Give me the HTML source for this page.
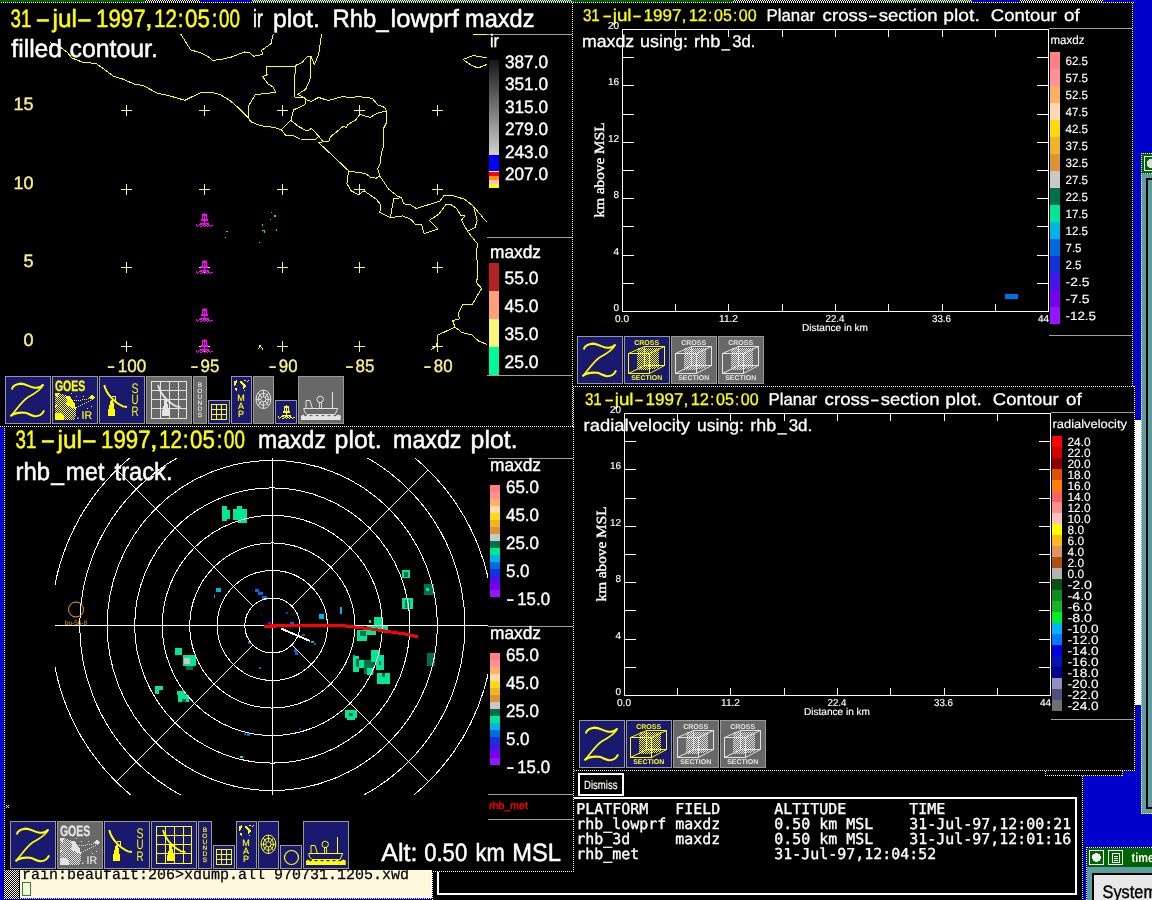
<!DOCTYPE html>
<html lang="en"><head><meta charset="utf-8"><title>zeb display - 31-jul-1997</title>
<style>html,body{margin:0;padding:0;background:#0000cd;overflow:hidden}svg{display:block;will-change:transform}text{white-space:pre}</style>
</head><body>
<svg width="1152" height="900" viewBox="0 0 1152 900" shape-rendering="crispEdges" text-rendering="geometricPrecision">
<rect x="0" y="0" width="1152" height="900" fill="#0000cd" />
<pattern id="stipY" width="2" height="2" patternUnits="userSpaceOnUse"><rect x="0" y="0" width="1" height="1" fill="#ffff00"/><rect x="1" y="1" width="1" height="1" fill="#ffff00"/></pattern>
<pattern id="stipG" width="2" height="2" patternUnits="userSpaceOnUse"><rect x="0" y="0" width="1" height="1" fill="#e4e4e4"/><rect x="1" y="1" width="1" height="1" fill="#e4e4e4"/></pattern>
<rect x="0" y="0" width="1152" height="3" fill="#000000" />
<pattern id="stipGW" width="2" height="2" patternUnits="userSpaceOnUse"><rect width="2" height="2" fill="#006400"/><rect x="0" y="0" width="1" height="1" fill="#ffffff"/><rect x="1" y="1" width="1" height="1" fill="#ffffff"/></pattern>
<pattern id="stipW" width="2" height="2" patternUnits="userSpaceOnUse"><rect width="2" height="2" fill="#000000"/><rect x="0" y="0" width="1" height="1" fill="#ffffff"/><rect x="1" y="1" width="1" height="1" fill="#ffffff"/></pattern>
<rect x="0" y="0" width="1134" height="2" fill="url(#stipW)" />
<rect x="0" y="0" width="145" height="2" fill="#006400" />
<rect x="200" y="0" width="52" height="2" fill="#0000cd" />
<rect x="252" y="0" width="320" height="2" fill="url(#stipGW)" />
<rect x="572" y="0" width="161" height="2" fill="#006400" />
<rect x="884" y="0" width="88" height="2" fill="url(#stipGW)" />
<rect x="972" y="0" width="48" height="2" fill="#0000cd" />
<rect x="1103" y="0" width="31" height="2" fill="#0000cd" />
<line x1="1" y1="2.5" x2="1134" y2="2.5" stroke="#ffffff" stroke-width="1" stroke-dasharray="1 1"/>
<rect x="1134" y="0" width="18" height="3" fill="#0000cd" />
<rect x="1141" y="153" width="11" height="661" fill="#5f9ea0" />
<rect x="1141" y="153" width="11" height="21" fill="#006400" />
<line x1="1141" y1="153.5" x2="1152" y2="153.5" stroke="#ffffff" stroke-width="1" stroke-dasharray="1 1"/>
<line x1="1141" y1="173.5" x2="1152" y2="173.5" stroke="#ffffff" stroke-width="1" stroke-dasharray="1 1"/>
<line x1="1141.5" y1="153" x2="1141.5" y2="814" stroke="#ffffff" stroke-width="1" stroke-dasharray="1 1"/>
<line x1="1141" y1="813.5" x2="1152" y2="813.5" stroke="#ffffff" stroke-width="1" stroke-dasharray="1 1"/>
<rect x="1144" y="156" width="8" height="15" fill="#ffffff" />
<rect x="1145" y="157" width="7" height="13" fill="#006400" />
<circle cx="1151" cy="163.5" r="4.5" fill="#dcdcdc"/>
<rect x="1146" y="178" width="2" height="631" fill="#000000" />
<rect x="1146" y="807" width="6" height="2" fill="#000000" />
<rect x="1146" y="178" width="6" height="2" fill="#000000" />
<rect x="1135" y="420" width="6" height="285" fill="#ffffff" />
<rect x="1087" y="848" width="65" height="52" fill="#5f9ea0" />
<rect x="1087" y="848" width="65" height="19" fill="#006400" />
<line x1="1087" y1="847.5" x2="1152" y2="847.5" stroke="#ffffff" stroke-width="1" stroke-dasharray="1 1"/>
<line x1="1086.5" y1="847" x2="1086.5" y2="900" stroke="#ffffff" stroke-width="1" stroke-dasharray="1 1"/>
<rect x="1089.5" y="850.5" width="14" height="14" fill="none" stroke="#ffffff" stroke-width="1"/>
<circle cx="1096.5" cy="857.5" r="4.5" fill="#f0f0f0"/>
<rect x="1108.5" y="850.5" width="14" height="14" fill="none" stroke="#ffffff" stroke-width="1"/>
<rect x="1112.5" y="853.5" width="7" height="9" fill="none" stroke="#ffffff" stroke-width="1"/>
<path d="M1114 856.5 H1118 M1114 858.5 H1118 M1114 860.5 H1118" stroke="#ffffff" stroke-width="1"/>
<text x="1131.5" y="861.5" font-size="13" fill="#ffffff" font-family='"Liberation Sans", sans-serif' textLength="22.5" lengthAdjust="spacingAndGlyphs" font-weight="bold"  xml:space="preserve">time</text>
<rect x="1092" y="873" width="60" height="27" fill="#000000" />
<rect x="1094" y="875" width="58" height="25" fill="#e8e8e8" />
<text x="1102.5" y="898.3" font-size="18" fill="#000000" font-family='"Liberation Sans", sans-serif' stroke="#000000" stroke-width="0.4" stroke-linejoin="round" textLength="54.5" lengthAdjust="spacingAndGlyphs"  xml:space="preserve">System</text>
<rect x="432" y="771" width="651" height="129" fill="#000000" />
<line x1="1082.5" y1="776" x2="1082.5" y2="900" stroke="#ffffff" stroke-width="1" stroke-dasharray="1 1"/>
<line x1="432.5" y1="871" x2="432.5" y2="900" stroke="#ffffff" stroke-width="1" stroke-dasharray="1 1"/>
<rect x="1045" y="771" width="78" height="5" fill="#000000" />
<line x1="1045" y1="775.5" x2="1123" y2="775.5" stroke="#ffffff" stroke-width="1" stroke-dasharray="1 1"/>
<line x1="1045.5" y1="771" x2="1045.5" y2="776" stroke="#ffffff" stroke-width="1" stroke-dasharray="1 1"/>
<line x1="1122.5" y1="771" x2="1122.5" y2="776" stroke="#ffffff" stroke-width="1" stroke-dasharray="1 1"/>
<rect x="578" y="773" width="46" height="23" fill="#ffffff" />
<rect x="580" y="775" width="42" height="19" fill="#000000" />
<text x="584" y="788.6" font-size="12" fill="#ffffff" font-family='"Liberation Sans", sans-serif' stroke="#ffffff" stroke-width="0.15" stroke-linejoin="round" textLength="33.5" lengthAdjust="spacingAndGlyphs"  xml:space="preserve">Dismiss</text>
<rect x="437" y="797" width="640" height="98" fill="#ffffff" />
<rect x="439" y="799" width="636" height="94" fill="#000000" />
<text x="576.2" y="813.7" font-size="15" fill="#ffffff" font-family='"DejaVu Sans Mono", "Liberation Mono", monospace' stroke="#ffffff" stroke-width="0.35" stroke-linejoin="round" textLength="369" lengthAdjust="spacingAndGlyphs"  xml:space="preserve">PLATFORM   FIELD      ALTITUDE       TIME</text>
<text x="576.2" y="828.7" font-size="15" fill="#ffffff" font-family='"DejaVu Sans Mono", "Liberation Mono", monospace' stroke="#ffffff" stroke-width="0.35" stroke-linejoin="round" textLength="495" lengthAdjust="spacingAndGlyphs"  xml:space="preserve">rhb_lowprf maxdz      0.50 km MSL    31-Jul-97,12:00:21</text>
<text x="576.2" y="843.7" font-size="15" fill="#ffffff" font-family='"DejaVu Sans Mono", "Liberation Mono", monospace' stroke="#ffffff" stroke-width="0.35" stroke-linejoin="round" textLength="495" lengthAdjust="spacingAndGlyphs"  xml:space="preserve">rhb_3d     maxdz      0.50 km MSL    31-Jul-97,12:01:16</text>
<text x="576.2" y="858.7" font-size="15" fill="#ffffff" font-family='"DejaVu Sans Mono", "Liberation Mono", monospace' stroke="#ffffff" stroke-width="0.35" stroke-linejoin="round" textLength="360" lengthAdjust="spacingAndGlyphs"  xml:space="preserve">rhb_met               31-Jul-97,12:04:52</text>
<rect x="573" y="386" width="562" height="385" fill="#000000" />
<line x1="573" y1="386.5" x2="1135" y2="386.5" stroke="#ffffff" stroke-width="1" stroke-dasharray="1 1"/>
<line x1="574" y1="770.5" x2="1135" y2="770.5" stroke="#ffffff" stroke-width="1" stroke-dasharray="1 1"/>
<line x1="573.5" y1="386" x2="573.5" y2="771" stroke="#ffffff" stroke-width="1" stroke-dasharray="1 1"/>
<line x1="1134.5" y1="386" x2="1134.5" y2="771" stroke="#ffffff" stroke-width="1" stroke-dasharray="1 1"/>
<text y="404.5" font-size="17" font-family='"Liberation Sans", sans-serif' stroke-linejoin="round" xml:space="preserve"><tspan x="584.90" textLength="16.91" lengthAdjust="spacingAndGlyphs" fill="#ffff00" stroke="#ffff00" stroke-width="0.3">31</tspan><tspan x="604.60" textLength="9.51" lengthAdjust="spacingAndGlyphs" fill="#ffff00" stroke="#ffff00" stroke-width="0.3">-</tspan><tspan x="614.71" textLength="18.85" lengthAdjust="spacingAndGlyphs" fill="#ffff00" stroke="#ffff00" stroke-width="0.3">jul</tspan><tspan x="634.20" textLength="9.51" lengthAdjust="spacingAndGlyphs" fill="#ffff00" stroke="#ffff00" stroke-width="0.3">-</tspan><tspan x="645.60" textLength="37.86" lengthAdjust="spacingAndGlyphs" fill="#ffff00" stroke="#ffff00" stroke-width="0.3">1997</tspan><tspan x="683.83" textLength="4.57" lengthAdjust="spacingAndGlyphs" fill="#ffff00" stroke="#ffff00" stroke-width="0.3">,</tspan><tspan x="690.73" textLength="18.31" lengthAdjust="spacingAndGlyphs" fill="#ffff00" stroke="#ffff00" stroke-width="0.3">12</tspan><tspan x="710.60" textLength="3.31" lengthAdjust="spacingAndGlyphs" fill="#ffff00" stroke="#ffff00" stroke-width="0.3">:</tspan><tspan x="716.00" textLength="17.83" lengthAdjust="spacingAndGlyphs" fill="#ffff00" stroke="#ffff00" stroke-width="0.3">05</tspan><tspan x="735.60" textLength="3.31" lengthAdjust="spacingAndGlyphs" fill="#ffff00" stroke="#ffff00" stroke-width="0.3">:</tspan><tspan x="740.80" textLength="17.83" lengthAdjust="spacingAndGlyphs" fill="#ffff00" stroke="#ffff00" stroke-width="0.3">00</tspan>  <tspan x="768.41" textLength="48.76" lengthAdjust="spacingAndGlyphs" fill="#ffffff" stroke="#ffffff" stroke-width="0.3">Planar</tspan> <tspan x="824.60" textLength="44.75" lengthAdjust="spacingAndGlyphs" fill="#ffffff" stroke="#ffffff" stroke-width="0.3">cross</tspan><tspan x="870.00" textLength="9.62" lengthAdjust="spacingAndGlyphs" fill="#ffffff" stroke="#ffffff" stroke-width="0.3">-</tspan><tspan x="880.70" textLength="58.90" lengthAdjust="spacingAndGlyphs" fill="#ffffff" stroke="#ffffff" stroke-width="0.3">section</tspan> <tspan x="945.37" textLength="36.45" lengthAdjust="spacingAndGlyphs" fill="#ffffff" stroke="#ffffff" stroke-width="0.3">plot.</tspan>  <tspan x="992.80" textLength="65.93" lengthAdjust="spacingAndGlyphs" fill="#ffffff" stroke="#ffffff" stroke-width="0.3">Contour</tspan> <tspan x="1066.00" textLength="15.69" lengthAdjust="spacingAndGlyphs" fill="#ffffff" stroke="#ffffff" stroke-width="0.3">of</tspan></text>
<rect x="624" y="413" width="427" height="1" fill="#ffffff" />
<rect x="624" y="695" width="427" height="1" fill="#ffffff" />
<rect x="624" y="413" width="1" height="283" fill="#ffffff" />
<rect x="1050" y="413" width="1" height="283" fill="#ffffff" />
<rect x="624" y="441" width="12" height="1" fill="#ffffff" />
<rect x="1039" y="441" width="11" height="1" fill="#ffffff" />
<rect x="624" y="469" width="12" height="1" fill="#ffffff" />
<rect x="1039" y="469" width="11" height="1" fill="#ffffff" />
<rect x="624" y="498" width="12" height="1" fill="#ffffff" />
<rect x="1039" y="498" width="11" height="1" fill="#ffffff" />
<rect x="624" y="526" width="12" height="1" fill="#ffffff" />
<rect x="1039" y="526" width="11" height="1" fill="#ffffff" />
<rect x="624" y="554" width="12" height="1" fill="#ffffff" />
<rect x="1039" y="554" width="11" height="1" fill="#ffffff" />
<rect x="624" y="582" width="12" height="1" fill="#ffffff" />
<rect x="1039" y="582" width="11" height="1" fill="#ffffff" />
<rect x="624" y="610" width="12" height="1" fill="#ffffff" />
<rect x="1039" y="610" width="11" height="1" fill="#ffffff" />
<rect x="624" y="639" width="12" height="1" fill="#ffffff" />
<rect x="1039" y="639" width="11" height="1" fill="#ffffff" />
<rect x="624" y="667" width="12" height="1" fill="#ffffff" />
<rect x="1039" y="667" width="11" height="1" fill="#ffffff" />
<rect x="677" y="413" width="1" height="8" fill="#ffffff" />
<rect x="677" y="688" width="1" height="7" fill="#ffffff" />
<rect x="730" y="413" width="1" height="8" fill="#ffffff" />
<rect x="730" y="688" width="1" height="7" fill="#ffffff" />
<rect x="784" y="413" width="1" height="8" fill="#ffffff" />
<rect x="784" y="688" width="1" height="7" fill="#ffffff" />
<rect x="837" y="413" width="1" height="8" fill="#ffffff" />
<rect x="837" y="688" width="1" height="7" fill="#ffffff" />
<rect x="890" y="413" width="1" height="8" fill="#ffffff" />
<rect x="890" y="688" width="1" height="7" fill="#ffffff" />
<rect x="944" y="413" width="1" height="8" fill="#ffffff" />
<rect x="944" y="688" width="1" height="7" fill="#ffffff" />
<rect x="997" y="413" width="1" height="8" fill="#ffffff" />
<rect x="997" y="688" width="1" height="7" fill="#ffffff" />
<text y="431.3" font-size="17" font-family='"Liberation Sans", sans-serif' stroke-linejoin="round" xml:space="preserve"><tspan x="583.62" textLength="106.44" lengthAdjust="spacingAndGlyphs" fill="#ffffff" stroke="#ffffff" stroke-width="0.3">radialvelocity</tspan> <tspan x="696.97" textLength="46.88" lengthAdjust="spacingAndGlyphs" fill="#ffffff" stroke="#ffffff" stroke-width="0.3">using:</tspan> <tspan x="750.24" textLength="25.94" lengthAdjust="spacingAndGlyphs" fill="#ffffff" stroke="#ffffff" stroke-width="0.3">rhb</tspan><tspan x="777.63" textLength="8.77" lengthAdjust="spacingAndGlyphs" fill="#ffffff" stroke="#ffffff" stroke-width="0.3">_</tspan><tspan x="788.70" textLength="23.52" lengthAdjust="spacingAndGlyphs" fill="#ffffff" stroke="#ffffff" stroke-width="0.3">3d.</tspan></text>
<text x="621" y="413" font-size="10" fill="#ffffff" font-family='"Liberation Sans", sans-serif' stroke="#ffffff" stroke-width="0.15" stroke-linejoin="round" text-anchor="end"  xml:space="preserve">20</text>
<text x="621" y="469.4" font-size="10" fill="#ffffff" font-family='"Liberation Sans", sans-serif' stroke="#ffffff" stroke-width="0.15" stroke-linejoin="round" text-anchor="end"  xml:space="preserve">16</text>
<text x="621" y="525.8" font-size="10" fill="#ffffff" font-family='"Liberation Sans", sans-serif' stroke="#ffffff" stroke-width="0.15" stroke-linejoin="round" text-anchor="end"  xml:space="preserve">12</text>
<text x="621" y="582.2" font-size="10" fill="#ffffff" font-family='"Liberation Sans", sans-serif' stroke="#ffffff" stroke-width="0.15" stroke-linejoin="round" text-anchor="end"  xml:space="preserve">8</text>
<text x="621" y="638.6" font-size="10" fill="#ffffff" font-family='"Liberation Sans", sans-serif' stroke="#ffffff" stroke-width="0.15" stroke-linejoin="round" text-anchor="end"  xml:space="preserve">4</text>
<text x="621" y="695" font-size="10" fill="#ffffff" font-family='"Liberation Sans", sans-serif' stroke="#ffffff" stroke-width="0.15" stroke-linejoin="round" text-anchor="end"  xml:space="preserve">0</text>
<text x="624" y="705.8" font-size="10" fill="#ffffff" font-family='"Liberation Sans", sans-serif' stroke="#ffffff" stroke-width="0.15" stroke-linejoin="round" textLength="14" lengthAdjust="spacingAndGlyphs" text-anchor="middle"  xml:space="preserve">0.0</text>
<text x="730.5" y="705.8" font-size="10" fill="#ffffff" font-family='"Liberation Sans", sans-serif' stroke="#ffffff" stroke-width="0.15" stroke-linejoin="round" textLength="19" lengthAdjust="spacingAndGlyphs" text-anchor="middle"  xml:space="preserve">11.2</text>
<text x="837" y="705.8" font-size="10" fill="#ffffff" font-family='"Liberation Sans", sans-serif' stroke="#ffffff" stroke-width="0.15" stroke-linejoin="round" textLength="19" lengthAdjust="spacingAndGlyphs" text-anchor="middle"  xml:space="preserve">22.4</text>
<text x="943.5" y="705.8" font-size="10" fill="#ffffff" font-family='"Liberation Sans", sans-serif' stroke="#ffffff" stroke-width="0.15" stroke-linejoin="round" textLength="19" lengthAdjust="spacingAndGlyphs" text-anchor="middle"  xml:space="preserve">33.6</text>
<text x="1051" y="705.8" font-size="10" fill="#ffffff" font-family='"Liberation Sans", sans-serif' stroke="#ffffff" stroke-width="0.15" stroke-linejoin="round" text-anchor="end"  xml:space="preserve">44</text>
<text x="804" y="715" font-size="10" fill="#ffffff" font-family='"Liberation Sans", sans-serif' stroke="#ffffff" stroke-width="0.15" stroke-linejoin="round" textLength="66" lengthAdjust="spacingAndGlyphs"  xml:space="preserve">Distance in km</text>
<text transform="translate(605.5,554) rotate(-90)" text-anchor="middle" font-size="14" stroke="#ffffff" stroke-width="0.35" fill="#ffffff" font-family='"Liberation Serif", serif' textLength="95" lengthAdjust="spacingAndGlyphs">km above MSL</text>
<rect x="1051" y="412" width="83" height="1" fill="#a0a0a0" />
<rect x="1051" y="719" width="83" height="1" fill="#a0a0a0" />
<text x="1052.5" y="427.6" font-size="12" fill="#ffffff" font-family='"Liberation Sans", sans-serif' stroke="#ffffff" stroke-width="0.15" stroke-linejoin="round" textLength="74.5" lengthAdjust="spacingAndGlyphs"  xml:space="preserve">radialvelocity</text>
<rect x="1052" y="436" width="10" height="11" fill="#ff0000" />
<text x="1067.5" y="446" font-size="12" fill="#ffffff" font-family='"Liberation Sans", sans-serif' stroke="#ffffff" stroke-width="0.15" stroke-linejoin="round" textLength="23.1" lengthAdjust="spacingAndGlyphs"  xml:space="preserve">24.0</text>
<rect x="1052" y="447" width="10" height="11" fill="#d40000" />
<text x="1067.5" y="457" font-size="12" fill="#ffffff" font-family='"Liberation Sans", sans-serif' stroke="#ffffff" stroke-width="0.15" stroke-linejoin="round" textLength="23.1" lengthAdjust="spacingAndGlyphs"  xml:space="preserve">22.0</text>
<rect x="1052" y="458" width="10" height="11" fill="#8c0000" />
<text x="1067.5" y="468" font-size="12" fill="#ffffff" font-family='"Liberation Sans", sans-serif' stroke="#ffffff" stroke-width="0.15" stroke-linejoin="round" textLength="23.1" lengthAdjust="spacingAndGlyphs"  xml:space="preserve">20.0</text>
<rect x="1052" y="469" width="10" height="11" fill="#e05000" />
<text x="1067.5" y="479" font-size="12" fill="#ffffff" font-family='"Liberation Sans", sans-serif' stroke="#ffffff" stroke-width="0.15" stroke-linejoin="round" textLength="23.1" lengthAdjust="spacingAndGlyphs"  xml:space="preserve">18.0</text>
<rect x="1052" y="480" width="10" height="11" fill="#ff8000" />
<text x="1067.5" y="490" font-size="12" fill="#ffffff" font-family='"Liberation Sans", sans-serif' stroke="#ffffff" stroke-width="0.15" stroke-linejoin="round" textLength="23.1" lengthAdjust="spacingAndGlyphs"  xml:space="preserve">16.0</text>
<rect x="1052" y="491" width="10" height="11" fill="#ff6060" />
<text x="1067.5" y="501" font-size="12" fill="#ffffff" font-family='"Liberation Sans", sans-serif' stroke="#ffffff" stroke-width="0.15" stroke-linejoin="round" textLength="23.1" lengthAdjust="spacingAndGlyphs"  xml:space="preserve">14.0</text>
<rect x="1052" y="502" width="10" height="11" fill="#ff9090" />
<text x="1067.5" y="512" font-size="12" fill="#ffffff" font-family='"Liberation Sans", sans-serif' stroke="#ffffff" stroke-width="0.15" stroke-linejoin="round" textLength="23.1" lengthAdjust="spacingAndGlyphs"  xml:space="preserve">12.0</text>
<rect x="1052" y="513" width="10" height="11" fill="#ffc0c0" />
<text x="1067.5" y="523" font-size="12" fill="#ffffff" font-family='"Liberation Sans", sans-serif' stroke="#ffffff" stroke-width="0.15" stroke-linejoin="round" textLength="23.1" lengthAdjust="spacingAndGlyphs"  xml:space="preserve">10.0</text>
<rect x="1052" y="524" width="10" height="11" fill="#ffff00" />
<text x="1067.5" y="534" font-size="12" fill="#ffffff" font-family='"Liberation Sans", sans-serif' stroke="#ffffff" stroke-width="0.15" stroke-linejoin="round" textLength="16.5" lengthAdjust="spacingAndGlyphs"  xml:space="preserve">8.0</text>
<rect x="1052" y="535" width="10" height="11" fill="#ffb820" />
<text x="1067.5" y="545" font-size="12" fill="#ffffff" font-family='"Liberation Sans", sans-serif' stroke="#ffffff" stroke-width="0.15" stroke-linejoin="round" textLength="16.5" lengthAdjust="spacingAndGlyphs"  xml:space="preserve">6.0</text>
<rect x="1052" y="546" width="10" height="11" fill="#dc9664" />
<text x="1067.5" y="556" font-size="12" fill="#ffffff" font-family='"Liberation Sans", sans-serif' stroke="#ffffff" stroke-width="0.15" stroke-linejoin="round" textLength="16.5" lengthAdjust="spacingAndGlyphs"  xml:space="preserve">4.0</text>
<rect x="1052" y="557" width="10" height="11" fill="#b05010" />
<text x="1067.5" y="567" font-size="12" fill="#ffffff" font-family='"Liberation Sans", sans-serif' stroke="#ffffff" stroke-width="0.15" stroke-linejoin="round" textLength="16.5" lengthAdjust="spacingAndGlyphs"  xml:space="preserve">2.0</text>
<rect x="1052" y="568" width="10" height="11" fill="#b4b4b4" />
<text x="1067.5" y="578" font-size="12" fill="#ffffff" font-family='"Liberation Sans", sans-serif' stroke="#ffffff" stroke-width="0.15" stroke-linejoin="round" textLength="16.5" lengthAdjust="spacingAndGlyphs"  xml:space="preserve">0.0</text>
<rect x="1052" y="579" width="10" height="11" fill="#0a5014" />
<text x="1067.5" y="589" font-size="12" fill="#ffffff" font-family='"Liberation Sans", sans-serif' stroke="#ffffff" stroke-width="0.15" stroke-linejoin="round" textLength="24.5" lengthAdjust="spacingAndGlyphs"  xml:space="preserve">-2.0</text>
<rect x="1052" y="590" width="10" height="11" fill="#0f8c1e" />
<text x="1067.5" y="600" font-size="12" fill="#ffffff" font-family='"Liberation Sans", sans-serif' stroke="#ffffff" stroke-width="0.15" stroke-linejoin="round" textLength="24.5" lengthAdjust="spacingAndGlyphs"  xml:space="preserve">-4.0</text>
<rect x="1052" y="601" width="10" height="11" fill="#14b428" />
<text x="1067.5" y="611" font-size="12" fill="#ffffff" font-family='"Liberation Sans", sans-serif' stroke="#ffffff" stroke-width="0.15" stroke-linejoin="round" textLength="24.5" lengthAdjust="spacingAndGlyphs"  xml:space="preserve">-6.0</text>
<rect x="1052" y="612" width="10" height="11" fill="#00f020" />
<text x="1067.5" y="622" font-size="12" fill="#ffffff" font-family='"Liberation Sans", sans-serif' stroke="#ffffff" stroke-width="0.15" stroke-linejoin="round" textLength="24.5" lengthAdjust="spacingAndGlyphs"  xml:space="preserve">-8.0</text>
<rect x="1052" y="623" width="10" height="11" fill="#00b4ff" />
<text x="1067.5" y="633" font-size="12" fill="#ffffff" font-family='"Liberation Sans", sans-serif' stroke="#ffffff" stroke-width="0.15" stroke-linejoin="round" textLength="31.1" lengthAdjust="spacingAndGlyphs"  xml:space="preserve">-10.0</text>
<rect x="1052" y="634" width="10" height="11" fill="#0078ff" />
<text x="1067.5" y="644" font-size="12" fill="#ffffff" font-family='"Liberation Sans", sans-serif' stroke="#ffffff" stroke-width="0.15" stroke-linejoin="round" textLength="31.1" lengthAdjust="spacingAndGlyphs"  xml:space="preserve">-12.0</text>
<rect x="1052" y="645" width="10" height="11" fill="#0000dc" />
<text x="1067.5" y="655" font-size="12" fill="#ffffff" font-family='"Liberation Sans", sans-serif' stroke="#ffffff" stroke-width="0.15" stroke-linejoin="round" textLength="31.1" lengthAdjust="spacingAndGlyphs"  xml:space="preserve">-14.0</text>
<rect x="1052" y="656" width="10" height="11" fill="#0014b4" />
<text x="1067.5" y="666" font-size="12" fill="#ffffff" font-family='"Liberation Sans", sans-serif' stroke="#ffffff" stroke-width="0.15" stroke-linejoin="round" textLength="31.1" lengthAdjust="spacingAndGlyphs"  xml:space="preserve">-16.0</text>
<rect x="1052" y="667" width="10" height="11" fill="#000090" />
<text x="1067.5" y="677" font-size="12" fill="#ffffff" font-family='"Liberation Sans", sans-serif' stroke="#ffffff" stroke-width="0.15" stroke-linejoin="round" textLength="31.1" lengthAdjust="spacingAndGlyphs"  xml:space="preserve">-18.0</text>
<rect x="1052" y="678" width="10" height="11" fill="#9090c0" />
<text x="1067.5" y="688" font-size="12" fill="#ffffff" font-family='"Liberation Sans", sans-serif' stroke="#ffffff" stroke-width="0.15" stroke-linejoin="round" textLength="31.1" lengthAdjust="spacingAndGlyphs"  xml:space="preserve">-20.0</text>
<rect x="1052" y="689" width="10" height="11" fill="#505080" />
<text x="1067.5" y="699" font-size="12" fill="#ffffff" font-family='"Liberation Sans", sans-serif' stroke="#ffffff" stroke-width="0.15" stroke-linejoin="round" textLength="31.1" lengthAdjust="spacingAndGlyphs"  xml:space="preserve">-22.0</text>
<rect x="1052" y="700" width="10" height="11" fill="#707070" />
<text x="1067.5" y="710" font-size="12" fill="#ffffff" font-family='"Liberation Sans", sans-serif' stroke="#ffffff" stroke-width="0.15" stroke-linejoin="round" textLength="31.1" lengthAdjust="spacingAndGlyphs"  xml:space="preserve">-24.0</text>
<rect x="579" y="720" width="46" height="48" fill="#9696a0" />
<rect x="580" y="721" width="44" height="46" fill="#191970" />
<g transform="translate(579,720)" shape-rendering="auto" fill="none" stroke="#ffff00" stroke-linecap="round" stroke-linejoin="round">
<path d="M7.1 12.6 C7.5 10.5 11 8 15.7 7.6 C20 7.6 24 10.6 28.4 11.5 C32 12.2 36 11.4 37.9 9" stroke-width="2.1"/>
<path d="M37.6 9.5 C36 14 30 17.5 22.9 21.2 C17 25 12 33 6.2 39.6" stroke-width="1.7"/>
<path d="M6.2 39.6 C9 37.5 13 36 20.1 36.8 C24 37.5 26 39.8 30 40.2 C34 40.3 37 38.5 38.7 35.1" stroke-width="2.1"/>
</g>
<rect x="626" y="720" width="46" height="48" fill="#9696a0" />
<rect x="627" y="721" width="44" height="46" fill="#191970" />
<g transform="translate(626,720)">
<text x="10.2" y="9" font-size="7" fill="#ffff00" font-family='"Liberation Sans", sans-serif' textLength="25" lengthAdjust="spacingAndGlyphs" font-weight="bold"  xml:space="preserve">CROSS</text>
<text x="7.2" y="43.9" font-size="7" fill="#ffff00" font-family='"Liberation Sans", sans-serif' textLength="31" lengthAdjust="spacingAndGlyphs" font-weight="bold"  xml:space="preserve">SECTION</text>
<g fill="none" stroke="#ffff00" stroke-width="1">
<rect x="4.5" y="17.5" width="21" height="20"/>
<rect x="20.5" y="10.5" width="20" height="19"/>
<path d="M4.5 17.5 L20.5 10.5 M25.5 17.5 L40.5 10.5 M4.5 37.5 L20.5 29.5 M25.5 37.5 L40.5 29.5" shape-rendering="auto"/>
</g>
<path d="M12.5 12.4 L25.3 12.4 L35 11.4 L35 31.5 L25.3 33.8 L12.5 33.8 Z" fill="url(#stipY)"/>
</g>
<rect x="673" y="720" width="46" height="48" fill="#9a9a9a" />
<rect x="674" y="721" width="44" height="46" fill="#686868" />
<g transform="translate(673,720)">
<text x="10.2" y="9" font-size="7" fill="#e4e4e4" font-family='"Liberation Sans", sans-serif' textLength="25" lengthAdjust="spacingAndGlyphs" font-weight="bold"  xml:space="preserve">CROSS</text>
<text x="7.2" y="43.9" font-size="7" fill="#e4e4e4" font-family='"Liberation Sans", sans-serif' textLength="31" lengthAdjust="spacingAndGlyphs" font-weight="bold"  xml:space="preserve">SECTION</text>
<g fill="none" stroke="#e4e4e4" stroke-width="1">
<rect x="4.5" y="17.5" width="21" height="20"/>
<rect x="20.5" y="10.5" width="20" height="19"/>
<path d="M4.5 17.5 L20.5 10.5 M25.5 17.5 L40.5 10.5 M4.5 37.5 L20.5 29.5 M25.5 37.5 L40.5 29.5" shape-rendering="auto"/>
</g>
<path d="M12.5 12.4 L25.3 12.4 L35 11.4 L35 31.5 L25.3 33.8 L12.5 33.8 Z" fill="url(#stipG)"/>
</g>
<rect x="720" y="720" width="46" height="48" fill="#9a9a9a" />
<rect x="721" y="721" width="44" height="46" fill="#686868" />
<g transform="translate(720,720)">
<text x="10.2" y="9" font-size="7" fill="#e4e4e4" font-family='"Liberation Sans", sans-serif' textLength="25" lengthAdjust="spacingAndGlyphs" font-weight="bold"  xml:space="preserve">CROSS</text>
<text x="7.2" y="43.9" font-size="7" fill="#e4e4e4" font-family='"Liberation Sans", sans-serif' textLength="31" lengthAdjust="spacingAndGlyphs" font-weight="bold"  xml:space="preserve">SECTION</text>
<g fill="none" stroke="#e4e4e4" stroke-width="1">
<rect x="4.5" y="17.5" width="21" height="20"/>
<rect x="20.5" y="10.5" width="20" height="19"/>
<path d="M4.5 17.5 L20.5 10.5 M25.5 17.5 L40.5 10.5 M4.5 37.5 L20.5 29.5 M25.5 37.5 L40.5 29.5" shape-rendering="auto"/>
</g>
<path d="M12.5 12.4 L25.3 12.4 L35 11.4 L35 31.5 L25.3 33.8 L12.5 33.8 Z" fill="url(#stipG)"/>
</g>
<rect x="572" y="3" width="561" height="383" fill="#000000" />
<line x1="572.5" y1="3" x2="572.5" y2="427" stroke="#ffffff" stroke-width="1" stroke-dasharray="1 1"/>
<line x1="1132.5" y1="3" x2="1132.5" y2="386" stroke="#ffffff" stroke-width="1" stroke-dasharray="1 1"/>
<text y="20.5" font-size="17" font-family='"Liberation Sans", sans-serif' stroke-linejoin="round" xml:space="preserve"><tspan x="582.90" textLength="16.91" lengthAdjust="spacingAndGlyphs" fill="#ffff00" stroke="#ffff00" stroke-width="0.3">31</tspan><tspan x="602.60" textLength="9.51" lengthAdjust="spacingAndGlyphs" fill="#ffff00" stroke="#ffff00" stroke-width="0.3">-</tspan><tspan x="612.71" textLength="18.85" lengthAdjust="spacingAndGlyphs" fill="#ffff00" stroke="#ffff00" stroke-width="0.3">jul</tspan><tspan x="632.20" textLength="9.51" lengthAdjust="spacingAndGlyphs" fill="#ffff00" stroke="#ffff00" stroke-width="0.3">-</tspan><tspan x="643.60" textLength="37.86" lengthAdjust="spacingAndGlyphs" fill="#ffff00" stroke="#ffff00" stroke-width="0.3">1997</tspan><tspan x="681.83" textLength="4.57" lengthAdjust="spacingAndGlyphs" fill="#ffff00" stroke="#ffff00" stroke-width="0.3">,</tspan><tspan x="688.73" textLength="18.31" lengthAdjust="spacingAndGlyphs" fill="#ffff00" stroke="#ffff00" stroke-width="0.3">12</tspan><tspan x="708.60" textLength="3.31" lengthAdjust="spacingAndGlyphs" fill="#ffff00" stroke="#ffff00" stroke-width="0.3">:</tspan><tspan x="714.00" textLength="17.83" lengthAdjust="spacingAndGlyphs" fill="#ffff00" stroke="#ffff00" stroke-width="0.3">05</tspan><tspan x="733.60" textLength="3.31" lengthAdjust="spacingAndGlyphs" fill="#ffff00" stroke="#ffff00" stroke-width="0.3">:</tspan><tspan x="738.80" textLength="17.83" lengthAdjust="spacingAndGlyphs" fill="#ffff00" stroke="#ffff00" stroke-width="0.3">00</tspan>  <tspan x="766.41" textLength="48.76" lengthAdjust="spacingAndGlyphs" fill="#ffffff" stroke="#ffffff" stroke-width="0.3">Planar</tspan> <tspan x="822.60" textLength="44.75" lengthAdjust="spacingAndGlyphs" fill="#ffffff" stroke="#ffffff" stroke-width="0.3">cross</tspan><tspan x="868.00" textLength="9.62" lengthAdjust="spacingAndGlyphs" fill="#ffffff" stroke="#ffffff" stroke-width="0.3">-</tspan><tspan x="878.70" textLength="58.90" lengthAdjust="spacingAndGlyphs" fill="#ffffff" stroke="#ffffff" stroke-width="0.3">section</tspan> <tspan x="943.37" textLength="36.45" lengthAdjust="spacingAndGlyphs" fill="#ffffff" stroke="#ffffff" stroke-width="0.3">plot.</tspan>  <tspan x="990.80" textLength="65.93" lengthAdjust="spacingAndGlyphs" fill="#ffffff" stroke="#ffffff" stroke-width="0.3">Contour</tspan> <tspan x="1064.00" textLength="15.69" lengthAdjust="spacingAndGlyphs" fill="#ffffff" stroke="#ffffff" stroke-width="0.3">of</tspan></text>
<rect x="622" y="29" width="427" height="1" fill="#ffffff" />
<rect x="622" y="311" width="427" height="1" fill="#ffffff" />
<rect x="622" y="29" width="1" height="283" fill="#ffffff" />
<rect x="1048" y="29" width="1" height="283" fill="#ffffff" />
<rect x="622" y="57" width="12" height="1" fill="#ffffff" />
<rect x="1037" y="57" width="11" height="1" fill="#ffffff" />
<rect x="622" y="85" width="12" height="1" fill="#ffffff" />
<rect x="1037" y="85" width="11" height="1" fill="#ffffff" />
<rect x="622" y="114" width="12" height="1" fill="#ffffff" />
<rect x="1037" y="114" width="11" height="1" fill="#ffffff" />
<rect x="622" y="142" width="12" height="1" fill="#ffffff" />
<rect x="1037" y="142" width="11" height="1" fill="#ffffff" />
<rect x="622" y="170" width="12" height="1" fill="#ffffff" />
<rect x="1037" y="170" width="11" height="1" fill="#ffffff" />
<rect x="622" y="198" width="12" height="1" fill="#ffffff" />
<rect x="1037" y="198" width="11" height="1" fill="#ffffff" />
<rect x="622" y="226" width="12" height="1" fill="#ffffff" />
<rect x="1037" y="226" width="11" height="1" fill="#ffffff" />
<rect x="622" y="255" width="12" height="1" fill="#ffffff" />
<rect x="1037" y="255" width="11" height="1" fill="#ffffff" />
<rect x="622" y="283" width="12" height="1" fill="#ffffff" />
<rect x="1037" y="283" width="11" height="1" fill="#ffffff" />
<rect x="675" y="29" width="1" height="8" fill="#ffffff" />
<rect x="675" y="304" width="1" height="7" fill="#ffffff" />
<rect x="728" y="29" width="1" height="8" fill="#ffffff" />
<rect x="728" y="304" width="1" height="7" fill="#ffffff" />
<rect x="782" y="29" width="1" height="8" fill="#ffffff" />
<rect x="782" y="304" width="1" height="7" fill="#ffffff" />
<rect x="835" y="29" width="1" height="8" fill="#ffffff" />
<rect x="835" y="304" width="1" height="7" fill="#ffffff" />
<rect x="888" y="29" width="1" height="8" fill="#ffffff" />
<rect x="888" y="304" width="1" height="7" fill="#ffffff" />
<rect x="942" y="29" width="1" height="8" fill="#ffffff" />
<rect x="942" y="304" width="1" height="7" fill="#ffffff" />
<rect x="995" y="29" width="1" height="8" fill="#ffffff" />
<rect x="995" y="304" width="1" height="7" fill="#ffffff" />
<text y="47.3" font-size="17" font-family='"Liberation Sans", sans-serif' stroke-linejoin="round" xml:space="preserve"><tspan x="581.96" textLength="52.16" lengthAdjust="spacingAndGlyphs" fill="#ffffff" stroke="#ffffff" stroke-width="0.3">maxdz</tspan> <tspan x="640.05" textLength="47.82" lengthAdjust="spacingAndGlyphs" fill="#ffffff" stroke="#ffffff" stroke-width="0.3">using:</tspan> <tspan x="693.93" textLength="26.36" lengthAdjust="spacingAndGlyphs" fill="#ffffff" stroke="#ffffff" stroke-width="0.3">rhb</tspan><tspan x="721.86" textLength="8.17" lengthAdjust="spacingAndGlyphs" fill="#ffffff" stroke="#ffffff" stroke-width="0.3">_</tspan><tspan x="732.30" textLength="23.21" lengthAdjust="spacingAndGlyphs" fill="#ffffff" stroke="#ffffff" stroke-width="0.3">3d.</tspan></text>
<text x="619" y="29" font-size="10" fill="#ffffff" font-family='"Liberation Sans", sans-serif' stroke="#ffffff" stroke-width="0.15" stroke-linejoin="round" text-anchor="end"  xml:space="preserve">20</text>
<text x="619" y="85.4" font-size="10" fill="#ffffff" font-family='"Liberation Sans", sans-serif' stroke="#ffffff" stroke-width="0.15" stroke-linejoin="round" text-anchor="end"  xml:space="preserve">16</text>
<text x="619" y="141.8" font-size="10" fill="#ffffff" font-family='"Liberation Sans", sans-serif' stroke="#ffffff" stroke-width="0.15" stroke-linejoin="round" text-anchor="end"  xml:space="preserve">12</text>
<text x="619" y="198.2" font-size="10" fill="#ffffff" font-family='"Liberation Sans", sans-serif' stroke="#ffffff" stroke-width="0.15" stroke-linejoin="round" text-anchor="end"  xml:space="preserve">8</text>
<text x="619" y="254.6" font-size="10" fill="#ffffff" font-family='"Liberation Sans", sans-serif' stroke="#ffffff" stroke-width="0.15" stroke-linejoin="round" text-anchor="end"  xml:space="preserve">4</text>
<text x="619" y="311" font-size="10" fill="#ffffff" font-family='"Liberation Sans", sans-serif' stroke="#ffffff" stroke-width="0.15" stroke-linejoin="round" text-anchor="end"  xml:space="preserve">0</text>
<text x="622" y="321.8" font-size="10" fill="#ffffff" font-family='"Liberation Sans", sans-serif' stroke="#ffffff" stroke-width="0.15" stroke-linejoin="round" textLength="14" lengthAdjust="spacingAndGlyphs" text-anchor="middle"  xml:space="preserve">0.0</text>
<text x="728.5" y="321.8" font-size="10" fill="#ffffff" font-family='"Liberation Sans", sans-serif' stroke="#ffffff" stroke-width="0.15" stroke-linejoin="round" textLength="19" lengthAdjust="spacingAndGlyphs" text-anchor="middle"  xml:space="preserve">11.2</text>
<text x="835" y="321.8" font-size="10" fill="#ffffff" font-family='"Liberation Sans", sans-serif' stroke="#ffffff" stroke-width="0.15" stroke-linejoin="round" textLength="19" lengthAdjust="spacingAndGlyphs" text-anchor="middle"  xml:space="preserve">22.4</text>
<text x="941.5" y="321.8" font-size="10" fill="#ffffff" font-family='"Liberation Sans", sans-serif' stroke="#ffffff" stroke-width="0.15" stroke-linejoin="round" textLength="19" lengthAdjust="spacingAndGlyphs" text-anchor="middle"  xml:space="preserve">33.6</text>
<text x="1049" y="321.8" font-size="10" fill="#ffffff" font-family='"Liberation Sans", sans-serif' stroke="#ffffff" stroke-width="0.15" stroke-linejoin="round" text-anchor="end"  xml:space="preserve">44</text>
<text x="802" y="331" font-size="10" fill="#ffffff" font-family='"Liberation Sans", sans-serif' stroke="#ffffff" stroke-width="0.15" stroke-linejoin="round" textLength="66" lengthAdjust="spacingAndGlyphs"  xml:space="preserve">Distance in km</text>
<text transform="translate(603.5,170) rotate(-90)" text-anchor="middle" font-size="14" stroke="#ffffff" stroke-width="0.35" fill="#ffffff" font-family='"Liberation Serif", serif' textLength="95" lengthAdjust="spacingAndGlyphs">km above MSL</text>
<rect x="1049" y="28" width="83" height="1" fill="#a0a0a0" />
<rect x="1049" y="335" width="83" height="1" fill="#a0a0a0" />
<text x="1050.5" y="43.6" font-size="12" fill="#ffffff" font-family='"Liberation Sans", sans-serif' stroke="#ffffff" stroke-width="0.15" stroke-linejoin="round" textLength="34" lengthAdjust="spacingAndGlyphs"  xml:space="preserve">maxdz</text>
<rect x="1050" y="52" width="10" height="17" fill="#ff8080" />
<text x="1065.5" y="64.6" font-size="12" fill="#ffffff" font-family='"Liberation Sans", sans-serif' stroke="#ffffff" stroke-width="0.15" stroke-linejoin="round" textLength="22.5" lengthAdjust="spacingAndGlyphs"  xml:space="preserve">62.5</text>
<rect x="1050" y="69" width="10" height="17" fill="#ff9098" />
<text x="1065.5" y="81.6" font-size="12" fill="#ffffff" font-family='"Liberation Sans", sans-serif' stroke="#ffffff" stroke-width="0.15" stroke-linejoin="round" textLength="22.5" lengthAdjust="spacingAndGlyphs"  xml:space="preserve">57.5</text>
<rect x="1050" y="86" width="10" height="17" fill="#ffb060" />
<text x="1065.5" y="98.6" font-size="12" fill="#ffffff" font-family='"Liberation Sans", sans-serif' stroke="#ffffff" stroke-width="0.15" stroke-linejoin="round" textLength="22.5" lengthAdjust="spacingAndGlyphs"  xml:space="preserve">52.5</text>
<rect x="1050" y="103" width="10" height="17" fill="#ffdab0" />
<text x="1065.5" y="115.6" font-size="12" fill="#ffffff" font-family='"Liberation Sans", sans-serif' stroke="#ffffff" stroke-width="0.15" stroke-linejoin="round" textLength="22.5" lengthAdjust="spacingAndGlyphs"  xml:space="preserve">47.5</text>
<rect x="1050" y="120" width="10" height="17" fill="#ffd910" />
<text x="1065.5" y="132.6" font-size="12" fill="#ffffff" font-family='"Liberation Sans", sans-serif' stroke="#ffffff" stroke-width="0.15" stroke-linejoin="round" textLength="22.5" lengthAdjust="spacingAndGlyphs"  xml:space="preserve">42.5</text>
<rect x="1050" y="137" width="10" height="17" fill="#f0b428" />
<text x="1065.5" y="149.6" font-size="12" fill="#ffffff" font-family='"Liberation Sans", sans-serif' stroke="#ffffff" stroke-width="0.15" stroke-linejoin="round" textLength="22.5" lengthAdjust="spacingAndGlyphs"  xml:space="preserve">37.5</text>
<rect x="1050" y="154" width="10" height="17" fill="#dc9432" />
<text x="1065.5" y="166.6" font-size="12" fill="#ffffff" font-family='"Liberation Sans", sans-serif' stroke="#ffffff" stroke-width="0.15" stroke-linejoin="round" textLength="22.5" lengthAdjust="spacingAndGlyphs"  xml:space="preserve">32.5</text>
<rect x="1050" y="171" width="10" height="17" fill="#c8c8c8" />
<text x="1065.5" y="183.6" font-size="12" fill="#ffffff" font-family='"Liberation Sans", sans-serif' stroke="#ffffff" stroke-width="0.15" stroke-linejoin="round" textLength="22.5" lengthAdjust="spacingAndGlyphs"  xml:space="preserve">27.5</text>
<rect x="1050" y="188" width="10" height="17" fill="#00704a" />
<text x="1065.5" y="200.6" font-size="12" fill="#ffffff" font-family='"Liberation Sans", sans-serif' stroke="#ffffff" stroke-width="0.15" stroke-linejoin="round" textLength="22.5" lengthAdjust="spacingAndGlyphs"  xml:space="preserve">22.5</text>
<rect x="1050" y="205" width="10" height="17" fill="#00e896" />
<text x="1065.5" y="217.6" font-size="12" fill="#ffffff" font-family='"Liberation Sans", sans-serif' stroke="#ffffff" stroke-width="0.15" stroke-linejoin="round" textLength="22.5" lengthAdjust="spacingAndGlyphs"  xml:space="preserve">17.5</text>
<rect x="1050" y="222" width="10" height="17" fill="#00b4e6" />
<text x="1065.5" y="234.6" font-size="12" fill="#ffffff" font-family='"Liberation Sans", sans-serif' stroke="#ffffff" stroke-width="0.15" stroke-linejoin="round" textLength="22.5" lengthAdjust="spacingAndGlyphs"  xml:space="preserve">12.5</text>
<rect x="1050" y="239" width="10" height="17" fill="#0068e0" />
<text x="1065.5" y="251.6" font-size="12" fill="#ffffff" font-family='"Liberation Sans", sans-serif' stroke="#ffffff" stroke-width="0.15" stroke-linejoin="round" textLength="16" lengthAdjust="spacingAndGlyphs"  xml:space="preserve">7.5</text>
<rect x="1050" y="256" width="10" height="17" fill="#1432dc" />
<text x="1065.5" y="268.6" font-size="12" fill="#ffffff" font-family='"Liberation Sans", sans-serif' stroke="#ffffff" stroke-width="0.15" stroke-linejoin="round" textLength="16" lengthAdjust="spacingAndGlyphs"  xml:space="preserve">2.5</text>
<rect x="1050" y="273" width="10" height="17" fill="#4614e6" />
<text x="1065.5" y="285.6" font-size="12" fill="#ffffff" font-family='"Liberation Sans", sans-serif' stroke="#ffffff" stroke-width="0.15" stroke-linejoin="round" textLength="24" lengthAdjust="spacingAndGlyphs"  xml:space="preserve">-2.5</text>
<rect x="1050" y="290" width="10" height="17" fill="#7800f0" />
<text x="1065.5" y="302.6" font-size="12" fill="#ffffff" font-family='"Liberation Sans", sans-serif' stroke="#ffffff" stroke-width="0.15" stroke-linejoin="round" textLength="24" lengthAdjust="spacingAndGlyphs"  xml:space="preserve">-7.5</text>
<rect x="1050" y="307" width="10" height="17" fill="#9614ff" />
<text x="1065.5" y="319.6" font-size="12" fill="#ffffff" font-family='"Liberation Sans", sans-serif' stroke="#ffffff" stroke-width="0.15" stroke-linejoin="round" textLength="30.5" lengthAdjust="spacingAndGlyphs"  xml:space="preserve">-12.5</text>
<rect x="1005" y="294" width="13" height="5" fill="#0070e0" />
<rect x="577" y="336" width="46" height="48" fill="#9696a0" />
<rect x="578" y="337" width="44" height="46" fill="#191970" />
<g transform="translate(577,336)" shape-rendering="auto" fill="none" stroke="#ffff00" stroke-linecap="round" stroke-linejoin="round">
<path d="M7.1 12.6 C7.5 10.5 11 8 15.7 7.6 C20 7.6 24 10.6 28.4 11.5 C32 12.2 36 11.4 37.9 9" stroke-width="2.1"/>
<path d="M37.6 9.5 C36 14 30 17.5 22.9 21.2 C17 25 12 33 6.2 39.6" stroke-width="1.7"/>
<path d="M6.2 39.6 C9 37.5 13 36 20.1 36.8 C24 37.5 26 39.8 30 40.2 C34 40.3 37 38.5 38.7 35.1" stroke-width="2.1"/>
</g>
<rect x="624" y="336" width="46" height="48" fill="#9696a0" />
<rect x="625" y="337" width="44" height="46" fill="#191970" />
<g transform="translate(624,336)">
<text x="10.2" y="9" font-size="7" fill="#ffff00" font-family='"Liberation Sans", sans-serif' textLength="25" lengthAdjust="spacingAndGlyphs" font-weight="bold"  xml:space="preserve">CROSS</text>
<text x="7.2" y="43.9" font-size="7" fill="#ffff00" font-family='"Liberation Sans", sans-serif' textLength="31" lengthAdjust="spacingAndGlyphs" font-weight="bold"  xml:space="preserve">SECTION</text>
<g fill="none" stroke="#ffff00" stroke-width="1">
<rect x="4.5" y="17.5" width="21" height="20"/>
<rect x="20.5" y="10.5" width="20" height="19"/>
<path d="M4.5 17.5 L20.5 10.5 M25.5 17.5 L40.5 10.5 M4.5 37.5 L20.5 29.5 M25.5 37.5 L40.5 29.5" shape-rendering="auto"/>
</g>
<path d="M12.5 12.4 L25.3 12.4 L35 11.4 L35 31.5 L25.3 33.8 L12.5 33.8 Z" fill="url(#stipY)"/>
</g>
<rect x="671" y="336" width="46" height="48" fill="#9a9a9a" />
<rect x="672" y="337" width="44" height="46" fill="#686868" />
<g transform="translate(671,336)">
<text x="10.2" y="9" font-size="7" fill="#e4e4e4" font-family='"Liberation Sans", sans-serif' textLength="25" lengthAdjust="spacingAndGlyphs" font-weight="bold"  xml:space="preserve">CROSS</text>
<text x="7.2" y="43.9" font-size="7" fill="#e4e4e4" font-family='"Liberation Sans", sans-serif' textLength="31" lengthAdjust="spacingAndGlyphs" font-weight="bold"  xml:space="preserve">SECTION</text>
<g fill="none" stroke="#e4e4e4" stroke-width="1">
<rect x="4.5" y="17.5" width="21" height="20"/>
<rect x="20.5" y="10.5" width="20" height="19"/>
<path d="M4.5 17.5 L20.5 10.5 M25.5 17.5 L40.5 10.5 M4.5 37.5 L20.5 29.5 M25.5 37.5 L40.5 29.5" shape-rendering="auto"/>
</g>
<path d="M12.5 12.4 L25.3 12.4 L35 11.4 L35 31.5 L25.3 33.8 L12.5 33.8 Z" fill="url(#stipG)"/>
</g>
<rect x="718" y="336" width="46" height="48" fill="#9a9a9a" />
<rect x="719" y="337" width="44" height="46" fill="#686868" />
<g transform="translate(718,336)">
<text x="10.2" y="9" font-size="7" fill="#e4e4e4" font-family='"Liberation Sans", sans-serif' textLength="25" lengthAdjust="spacingAndGlyphs" font-weight="bold"  xml:space="preserve">CROSS</text>
<text x="7.2" y="43.9" font-size="7" fill="#e4e4e4" font-family='"Liberation Sans", sans-serif' textLength="31" lengthAdjust="spacingAndGlyphs" font-weight="bold"  xml:space="preserve">SECTION</text>
<g fill="none" stroke="#e4e4e4" stroke-width="1">
<rect x="4.5" y="17.5" width="21" height="20"/>
<rect x="20.5" y="10.5" width="20" height="19"/>
<path d="M4.5 17.5 L20.5 10.5 M25.5 17.5 L40.5 10.5 M4.5 37.5 L20.5 29.5 M25.5 37.5 L40.5 29.5" shape-rendering="auto"/>
</g>
<path d="M12.5 12.4 L25.3 12.4 L35 11.4 L35 31.5 L25.3 33.8 L12.5 33.8 Z" fill="url(#stipG)"/>
</g>
<rect x="5" y="427" width="569" height="445" fill="#000000" />
<line x1="5" y1="871.5" x2="574" y2="871.5" stroke="#ffffff" stroke-width="1" stroke-dasharray="1 1"/>
<line x1="573.5" y1="427" x2="573.5" y2="872" stroke="#ffffff" stroke-width="1" stroke-dasharray="1 1"/>
<clipPath id="ppiclip"><rect x="55" y="458" width="433" height="337"/></clipPath>
<g clip-path="url(#ppiclip)" shape-rendering="crispEdges">
<rect x="222" y="506" width="5" height="15" fill="#00e896" shape-rendering="crispEdges"/>
<rect x="227" y="510" width="3" height="9" fill="#00e896" shape-rendering="crispEdges"/>
<rect x="233" y="509" width="14" height="11" fill="#00e896" shape-rendering="crispEdges"/>
<rect x="237" y="506" width="5" height="4" fill="#00e896" shape-rendering="crispEdges"/>
<rect x="238" y="519" width="9" height="4" fill="#00e896" shape-rendering="crispEdges"/>
<rect x="402" y="570" width="8" height="8" fill="#00e896" shape-rendering="crispEdges"/>
<rect x="404" y="572" width="4" height="5" fill="#00704a" shape-rendering="crispEdges"/>
<rect x="424" y="584" width="10" height="11" fill="#00704a" shape-rendering="crispEdges"/>
<rect x="426" y="588" width="3" height="3" fill="#00e896" shape-rendering="crispEdges"/>
<rect x="402" y="598" width="11" height="11" fill="#00e896" shape-rendering="crispEdges"/>
<rect x="405" y="600" width="2" height="8" fill="#00704a" shape-rendering="crispEdges"/>
<rect x="409" y="600" width="1" height="8" fill="#00704a" shape-rendering="crispEdges"/>
<rect x="374" y="617" width="9" height="12" fill="#00e896" shape-rendering="crispEdges"/>
<rect x="369" y="620" width="2" height="3" fill="#00e896" shape-rendering="crispEdges"/>
<rect x="367" y="626" width="21" height="4" fill="#00e896" shape-rendering="crispEdges"/>
<rect x="357" y="630" width="10" height="11" fill="#00e896" shape-rendering="crispEdges"/>
<rect x="360" y="631" width="6" height="5" fill="#00704a" shape-rendering="crispEdges"/>
<rect x="367" y="629" width="9" height="6" fill="#00e896" shape-rendering="crispEdges"/>
<rect x="427" y="653" width="8" height="13" fill="#00704a" shape-rendering="crispEdges"/>
<rect x="353" y="656" width="6" height="16" fill="#00e896" shape-rendering="crispEdges"/>
<rect x="356" y="659" width="3" height="8" fill="#00704a" shape-rendering="crispEdges"/>
<rect x="359" y="660" width="8" height="8" fill="#00e896" shape-rendering="crispEdges"/>
<rect x="364" y="660" width="10" height="14" fill="#00704a" shape-rendering="crispEdges"/>
<rect x="367" y="668" width="6" height="7" fill="#00e896" shape-rendering="crispEdges"/>
<rect x="371" y="650" width="9" height="12" fill="#00e896" shape-rendering="crispEdges"/>
<rect x="376" y="655" width="8" height="15" fill="#00e896" shape-rendering="crispEdges"/>
<rect x="379" y="661" width="2" height="4" fill="#00704a" shape-rendering="crispEdges"/>
<rect x="353" y="655" width="2" height="2" fill="#00b4e6" shape-rendering="crispEdges"/>
<rect x="377" y="673" width="13" height="11" fill="#00e896" shape-rendering="crispEdges"/>
<rect x="382" y="673" width="3" height="4" fill="#00704a" shape-rendering="crispEdges"/>
<rect x="345" y="710" width="12" height="8" fill="#00e896" shape-rendering="crispEdges"/>
<rect x="347" y="716" width="8" height="4" fill="#00e896" shape-rendering="crispEdges"/>
<rect x="349" y="713" width="4" height="3" fill="#00704a" shape-rendering="crispEdges"/>
<rect x="175" y="648" width="7" height="7" fill="#00e896" shape-rendering="crispEdges"/>
<rect x="183" y="655" width="13" height="11" fill="#00e896" shape-rendering="crispEdges"/>
<rect x="184" y="658" width="6" height="6" fill="#c8c8c8" shape-rendering="crispEdges"/>
<rect x="186" y="666" width="7" height="4" fill="#00704a" shape-rendering="crispEdges"/>
<rect x="155" y="686" width="8" height="4" fill="#00e896" shape-rendering="crispEdges"/>
<rect x="155" y="690" width="4" height="4" fill="#00e896" shape-rendering="crispEdges"/>
<rect x="177" y="691" width="8" height="4" fill="#00e896" shape-rendering="crispEdges"/>
<rect x="178" y="695" width="11" height="7" fill="#00e896" shape-rendering="crispEdges"/>
<rect x="182" y="699" width="4" height="3" fill="#00704a" shape-rendering="crispEdges"/>
<rect x="240" y="756" width="3" height="2" fill="#00e896" shape-rendering="crispEdges"/>
<rect x="216" y="588" width="5" height="4" fill="#00b4e6" shape-rendering="crispEdges"/>
<rect x="214" y="595" width="1" height="3" fill="#00b4e6" shape-rendering="crispEdges"/>
<rect x="255" y="589" width="4" height="3" fill="#0068e0" shape-rendering="crispEdges"/>
<rect x="258" y="592" width="5" height="3" fill="#0068e0" shape-rendering="crispEdges"/>
<rect x="262" y="596" width="5" height="4" fill="#0068e0" shape-rendering="crispEdges"/>
<rect x="264" y="598" width="2" height="2" fill="#ffffff" shape-rendering="crispEdges"/>
<rect x="319" y="614" width="5" height="5" fill="#00b4e6" shape-rendering="crispEdges"/>
<rect x="340" y="607" width="2" height="7" fill="#00b4e6" shape-rendering="crispEdges"/>
<rect x="248" y="641" width="3" height="3" fill="#0068e0" shape-rendering="crispEdges"/>
<rect x="259" y="667" width="2" height="2" fill="#0068e0" shape-rendering="crispEdges"/>
<rect x="294" y="649" width="3" height="3" fill="#0068e0" shape-rendering="crispEdges"/>
<rect x="295" y="652" width="3" height="3" fill="#0068e0" shape-rendering="crispEdges"/>
<rect x="290" y="622" width="4" height="2" fill="#0068e0" shape-rendering="crispEdges"/>
<rect x="286" y="612" width="2" height="2" fill="#1432dc" shape-rendering="crispEdges"/>
<rect x="271" y="637" width="2" height="1" fill="#7800f0" shape-rendering="crispEdges"/>
<rect x="261" y="614" width="1" height="1" fill="#1432dc" shape-rendering="crispEdges"/>
<rect x="311" y="641" width="3" height="2" fill="#00b4e6" shape-rendering="crispEdges"/>
<rect x="314" y="643" width="2" height="2" fill="#0068e0" shape-rendering="crispEdges"/>
<rect x="302" y="634" width="3" height="2" fill="#0068e0" shape-rendering="crispEdges"/>
<rect x="247" y="733" width="3" height="3" fill="#0068e0" shape-rendering="crispEdges"/>
<rect x="299" y="728" width="2" height="2" fill="#1432dc" shape-rendering="crispEdges"/>
<rect x="244" y="733" width="2" height="2" fill="#0068e0" shape-rendering="crispEdges"/>
<circle cx="272.3" cy="625.5" r="27.52" fill="none" stroke="#ffffff" stroke-width="1"/>
<circle cx="272.3" cy="625.5" r="55.04" fill="none" stroke="#ffffff" stroke-width="1"/>
<circle cx="272.3" cy="625.5" r="82.56" fill="none" stroke="#ffffff" stroke-width="1"/>
<circle cx="272.3" cy="625.5" r="110.08" fill="none" stroke="#ffffff" stroke-width="1"/>
<circle cx="272.3" cy="625.5" r="137.60" fill="none" stroke="#ffffff" stroke-width="1"/>
<circle cx="272.3" cy="625.5" r="165.12" fill="none" stroke="#ffffff" stroke-width="1"/>
<circle cx="272.3" cy="625.5" r="192.64" fill="none" stroke="#ffffff" stroke-width="1"/>
<ellipse cx="272.3" cy="626.0" rx="221.2" ry="219.8" fill="none" stroke="#ffffff" stroke-width="1"/>
<line x1="55" y1="625.5" x2="488" y2="625.5" stroke="#ffffff" stroke-width="1" shape-rendering="crispEdges"/>
<line x1="272.3" y1="458" x2="272.3" y2="795" stroke="#ffffff" stroke-width="1" shape-rendering="crispEdges"/>
<line x1="291.8" y1="645.0" x2="428.0" y2="781.2" stroke="#ffffff" stroke-width="1"/>
<line x1="291.8" y1="606.0" x2="428.0" y2="469.8" stroke="#ffffff" stroke-width="1"/>
<line x1="252.8" y1="645.0" x2="116.6" y2="781.2" stroke="#ffffff" stroke-width="1"/>
<line x1="252.8" y1="606.0" x2="116.6" y2="469.8" stroke="#ffffff" stroke-width="1"/>
<line x1="281" y1="628.5" x2="310" y2="641" stroke="#ffffff" stroke-width="2"/>
<polyline points="264.5,627.0 270.0,626.0 277.0,625.0 300.0,625.0 342.0,625.5 371.0,629.0 408.0,634.5 418.0,637.0" fill="none" stroke="#ff0000" stroke-width="3" />
<rect x="264" y="625" width="12" height="3" fill="#ff0000" shape-rendering="crispEdges"/>
<rect x="268" y="622" width="3" height="2" fill="#7800f0" shape-rendering="crispEdges"/>
</g>
<circle cx="76" cy="609.5" r="7.5" fill="none" stroke="#ffa500" stroke-width="1" shape-rendering="auto"/>
<text x="65" y="624.5" font-size="6.5" fill="#ffa500" font-family='"Liberation Sans", sans-serif' textLength="22" lengthAdjust="spacingAndGlyphs"  xml:space="preserve">bo-56-8</text>
<rect x="6" y="805" width="1" height="1" fill="#faf08c" />
<rect x="8" y="805" width="1" height="1" fill="#faf08c" />
<rect x="7" y="806" width="1" height="1" fill="#faf08c" />
<rect x="6" y="807" width="1" height="1" fill="#faf08c" />
<rect x="8" y="807" width="1" height="1" fill="#faf08c" />
<text y="447.5" font-size="25" font-family='"Liberation Sans", sans-serif' stroke-linejoin="round" xml:space="preserve"><tspan x="15.60" textLength="20.78" lengthAdjust="spacingAndGlyphs" fill="#ffff00" stroke="#ffff00" stroke-width="0.5">31</tspan><tspan x="40.17" textLength="15.22" lengthAdjust="spacingAndGlyphs" fill="#ffff00" stroke="#ffff00" stroke-width="0.5">-</tspan><tspan x="57.58" textLength="24.44" lengthAdjust="spacingAndGlyphs" fill="#ffff00" stroke="#ffff00" stroke-width="0.5">jul</tspan><tspan x="81.60" textLength="15.82" lengthAdjust="spacingAndGlyphs" fill="#ffff00" stroke="#ffff00" stroke-width="0.5">-</tspan><tspan x="101.01" textLength="49.60" lengthAdjust="spacingAndGlyphs" fill="#ffff00" stroke="#ffff00" stroke-width="0.5">1997</tspan><tspan x="150.10" textLength="7.64" lengthAdjust="spacingAndGlyphs" fill="#ffff00" stroke="#ffff00" stroke-width="0.5">,</tspan><tspan x="158.97" textLength="22.97" lengthAdjust="spacingAndGlyphs" fill="#ffff00" stroke="#ffff00" stroke-width="0.5">12</tspan><tspan x="182.63" textLength="5.79" lengthAdjust="spacingAndGlyphs" fill="#ffff00" stroke="#ffff00" stroke-width="0.5">:</tspan><tspan x="190.00" textLength="24.81" lengthAdjust="spacingAndGlyphs" fill="#ffff00" stroke="#ffff00" stroke-width="0.5">05</tspan><tspan x="216.83" textLength="5.79" lengthAdjust="spacingAndGlyphs" fill="#ffff00" stroke="#ffff00" stroke-width="0.5">:</tspan><tspan x="224.00" textLength="20.88" lengthAdjust="spacingAndGlyphs" fill="#ffff00" stroke="#ffff00" stroke-width="0.5">00</tspan>  <tspan x="257.88" textLength="68.09" lengthAdjust="spacingAndGlyphs" fill="#ffffff" stroke="#ffffff" stroke-width="0.5">maxdz</tspan> <tspan x="334.60" textLength="47.03" lengthAdjust="spacingAndGlyphs" fill="#ffffff" stroke="#ffffff" stroke-width="0.5">plot.</tspan>  <tspan x="393.07" textLength="68.39" lengthAdjust="spacingAndGlyphs" fill="#ffffff" stroke="#ffffff" stroke-width="0.5">maxdz</tspan> <tspan x="470.61" textLength="46.93" lengthAdjust="spacingAndGlyphs" fill="#ffffff" stroke="#ffffff" stroke-width="0.5">plot.</tspan></text>
<text y="479.5" font-size="25" font-family='"Liberation Sans", sans-serif' stroke-linejoin="round" xml:space="preserve"><tspan x="15.44" textLength="34.52" lengthAdjust="spacingAndGlyphs" fill="#ffffff" stroke="#ffffff" stroke-width="0.5">rhb</tspan><tspan x="51.31" textLength="12.69" lengthAdjust="spacingAndGlyphs" fill="#ffffff" stroke="#ffffff" stroke-width="0.5">_</tspan><tspan x="65.77" textLength="38.68" lengthAdjust="spacingAndGlyphs" fill="#ffffff" stroke="#ffffff" stroke-width="0.5">met</tspan> <tspan x="114.60" textLength="57.94" lengthAdjust="spacingAndGlyphs" fill="#ffffff" stroke="#ffffff" stroke-width="0.5">track.</tspan></text>
<rect x="488" y="458" width="85" height="1" fill="#a0a0a0" />
<text x="490" y="471" font-size="18" fill="#ffffff" font-family='"Liberation Sans", sans-serif' stroke="#ffffff" stroke-width="0.4" stroke-linejoin="round" textLength="51" lengthAdjust="spacingAndGlyphs"  xml:space="preserve">maxdz</text>
<rect x="490" y="485" width="10" height="7" fill="#ff8080" />
<rect x="490" y="492" width="10" height="7" fill="#ff9098" />
<rect x="490" y="499" width="10" height="7" fill="#ffb060" />
<rect x="490" y="506" width="10" height="7" fill="#ffdab0" />
<rect x="490" y="513" width="10" height="7" fill="#ffd910" />
<rect x="490" y="520" width="10" height="7" fill="#f0b428" />
<rect x="490" y="527" width="10" height="7" fill="#dc9432" />
<rect x="490" y="534" width="10" height="7" fill="#c8c8c8" />
<rect x="490" y="541" width="10" height="7" fill="#00704a" />
<rect x="490" y="548" width="10" height="7" fill="#00e896" />
<rect x="490" y="555" width="10" height="7" fill="#00b4e6" />
<rect x="490" y="562" width="10" height="7" fill="#0068e0" />
<rect x="490" y="569" width="10" height="7" fill="#1432dc" />
<rect x="490" y="576" width="10" height="7" fill="#4614e6" />
<rect x="490" y="583" width="10" height="7" fill="#7800f0" />
<rect x="490" y="590" width="10" height="7" fill="#9614ff" />
<text x="506" y="492.5" font-size="18" fill="#ffffff" font-family='"Liberation Sans", sans-serif' stroke="#ffffff" stroke-width="0.4" stroke-linejoin="round" textLength="33" lengthAdjust="spacingAndGlyphs"  xml:space="preserve">65.0</text>
<text x="506" y="520.5" font-size="18" fill="#ffffff" font-family='"Liberation Sans", sans-serif' stroke="#ffffff" stroke-width="0.4" stroke-linejoin="round" textLength="33" lengthAdjust="spacingAndGlyphs"  xml:space="preserve">45.0</text>
<text x="506" y="548.5" font-size="18" fill="#ffffff" font-family='"Liberation Sans", sans-serif' stroke="#ffffff" stroke-width="0.4" stroke-linejoin="round" textLength="33" lengthAdjust="spacingAndGlyphs"  xml:space="preserve">25.0</text>
<text x="506" y="576.5" font-size="18" fill="#ffffff" font-family='"Liberation Sans", sans-serif' stroke="#ffffff" stroke-width="0.4" stroke-linejoin="round" textLength="23.5" lengthAdjust="spacingAndGlyphs"  xml:space="preserve">5.0</text>
<text y="604.5" font-size="18" font-family='"Liberation Sans", sans-serif' stroke-linejoin="round" xml:space="preserve"><tspan x="506.30" textLength="7.99" lengthAdjust="spacingAndGlyphs" fill="#ffffff" stroke="#ffffff" stroke-width="0.4">-</tspan><tspan x="517.27" textLength="32.74" lengthAdjust="spacingAndGlyphs" fill="#ffffff" stroke="#ffffff" stroke-width="0.4">15.0</tspan></text>
<rect x="488" y="626" width="85" height="1" fill="#a0a0a0" />
<text x="490" y="639" font-size="18" fill="#ffffff" font-family='"Liberation Sans", sans-serif' stroke="#ffffff" stroke-width="0.4" stroke-linejoin="round" textLength="51" lengthAdjust="spacingAndGlyphs"  xml:space="preserve">maxdz</text>
<rect x="490" y="653" width="10" height="7" fill="#ff8080" />
<rect x="490" y="660" width="10" height="7" fill="#ff9098" />
<rect x="490" y="667" width="10" height="7" fill="#ffb060" />
<rect x="490" y="674" width="10" height="7" fill="#ffdab0" />
<rect x="490" y="681" width="10" height="7" fill="#ffd910" />
<rect x="490" y="688" width="10" height="7" fill="#f0b428" />
<rect x="490" y="695" width="10" height="7" fill="#dc9432" />
<rect x="490" y="702" width="10" height="7" fill="#c8c8c8" />
<rect x="490" y="709" width="10" height="7" fill="#00704a" />
<rect x="490" y="716" width="10" height="7" fill="#00e896" />
<rect x="490" y="723" width="10" height="7" fill="#00b4e6" />
<rect x="490" y="730" width="10" height="7" fill="#0068e0" />
<rect x="490" y="737" width="10" height="7" fill="#1432dc" />
<rect x="490" y="744" width="10" height="7" fill="#4614e6" />
<rect x="490" y="751" width="10" height="7" fill="#7800f0" />
<rect x="490" y="758" width="10" height="7" fill="#9614ff" />
<text x="506" y="660.5" font-size="18" fill="#ffffff" font-family='"Liberation Sans", sans-serif' stroke="#ffffff" stroke-width="0.4" stroke-linejoin="round" textLength="33" lengthAdjust="spacingAndGlyphs"  xml:space="preserve">65.0</text>
<text x="506" y="688.5" font-size="18" fill="#ffffff" font-family='"Liberation Sans", sans-serif' stroke="#ffffff" stroke-width="0.4" stroke-linejoin="round" textLength="33" lengthAdjust="spacingAndGlyphs"  xml:space="preserve">45.0</text>
<text x="506" y="716.5" font-size="18" fill="#ffffff" font-family='"Liberation Sans", sans-serif' stroke="#ffffff" stroke-width="0.4" stroke-linejoin="round" textLength="33" lengthAdjust="spacingAndGlyphs"  xml:space="preserve">25.0</text>
<text x="506" y="744.5" font-size="18" fill="#ffffff" font-family='"Liberation Sans", sans-serif' stroke="#ffffff" stroke-width="0.4" stroke-linejoin="round" textLength="23.5" lengthAdjust="spacingAndGlyphs"  xml:space="preserve">5.0</text>
<text y="772.5" font-size="18" font-family='"Liberation Sans", sans-serif' stroke-linejoin="round" xml:space="preserve"><tspan x="506.30" textLength="7.99" lengthAdjust="spacingAndGlyphs" fill="#ffffff" stroke="#ffffff" stroke-width="0.4">-</tspan><tspan x="517.27" textLength="32.74" lengthAdjust="spacingAndGlyphs" fill="#ffffff" stroke="#ffffff" stroke-width="0.4">15.0</tspan></text>
<rect x="488" y="794" width="85" height="1" fill="#a0a0a0" />
<rect x="488" y="819" width="85" height="1" fill="#a0a0a0" />
<text x="489" y="809" font-size="10.5" fill="#ff0000" font-family='"Liberation Sans", sans-serif' stroke="#ff0000" stroke-width="0.35" stroke-linejoin="round" textLength="39" lengthAdjust="spacingAndGlyphs"  xml:space="preserve">rhb_met</text>
<text y="860.5" font-size="25" font-family='"Liberation Sans", sans-serif' stroke-linejoin="round" xml:space="preserve"><tspan x="381.30" textLength="36.15" lengthAdjust="spacingAndGlyphs" fill="#ffffff" stroke="#ffffff" stroke-width="0.5">Alt:</tspan> <tspan x="424.20" textLength="43.00" lengthAdjust="spacingAndGlyphs" fill="#ffffff" stroke="#ffffff" stroke-width="0.5">0.50</tspan> <tspan x="475.42" textLength="29.31" lengthAdjust="spacingAndGlyphs" fill="#ffffff" stroke="#ffffff" stroke-width="0.5">km</tspan> <tspan x="512.21" textLength="48.70" lengthAdjust="spacingAndGlyphs" fill="#ffffff" stroke="#ffffff" stroke-width="0.5">MSL</tspan></text>
<rect x="10" y="821" width="46" height="48" fill="#9696a0" />
<rect x="11" y="822" width="44" height="46" fill="#191970" />
<g transform="translate(10,821)" shape-rendering="auto" fill="none" stroke="#ffff00" stroke-linecap="round" stroke-linejoin="round">
<path d="M7.1 12.6 C7.5 10.5 11 8 15.7 7.6 C20 7.6 24 10.6 28.4 11.5 C32 12.2 36 11.4 37.9 9" stroke-width="2.1"/>
<path d="M37.6 9.5 C36 14 30 17.5 22.9 21.2 C17 25 12 33 6.2 39.6" stroke-width="1.7"/>
<path d="M6.2 39.6 C9 37.5 13 36 20.1 36.8 C24 37.5 26 39.8 30 40.2 C34 40.3 37 38.5 38.7 35.1" stroke-width="2.1"/>
</g>
<rect x="57" y="821" width="46" height="48" fill="#9a9a9a" />
<rect x="58" y="822" width="44" height="46" fill="#686868" />
<g transform="translate(57,821)">
<text x="2.9" y="15" font-size="15" fill="#e4e4e4" font-family='"Liberation Sans", sans-serif' stroke="#e4e4e4" stroke-width="0.3" stroke-linejoin="round" textLength="30.5" lengthAdjust="spacingAndGlyphs" font-weight="bold"  xml:space="preserve">GOES</text>
<path d="M3 17 L8 17 Q20 21 24 32 L24 36 L23 44 L3 44 Z" fill="url(#stipG)"/>
<path d="M13 21 L17.3 19.5 L23 28 L24 33.5 L18.4 31 L13.4 27.3 L15.7 24 Z" fill="#e4e4e4"/>
<path d="M3 37.3 L7.9 36.8 L12.3 39.5 L12.3 44 L3 44 Z" fill="#e4e4e4"/>
<path d="M3 17 L8 17 L5.5 20.5 L3 20 Z M3 28.4 L5.5 30 L3 32 Z" fill="#e4e4e4"/>
<path d="M40.4 18.6 L43.3 21.5 L40.4 24.4 L37.5 21.5 Z" fill="#e4e4e4"/>
<rect x="22" y="24" width="1" height="1" fill="#e4e4e4" />
<rect x="24" y="31" width="1" height="1" fill="#e4e4e4" />
<rect x="24" y="24" width="1" height="1" fill="#e4e4e4" />
<rect x="26" y="30" width="1" height="1" fill="#e4e4e4" />
<rect x="26" y="24" width="1" height="1" fill="#e4e4e4" />
<rect x="28" y="29" width="1" height="1" fill="#e4e4e4" />
<rect x="28" y="24" width="1" height="1" fill="#e4e4e4" />
<rect x="30" y="28" width="1" height="1" fill="#e4e4e4" />
<rect x="30" y="23" width="1" height="1" fill="#e4e4e4" />
<rect x="32" y="27" width="1" height="1" fill="#e4e4e4" />
<rect x="32" y="23" width="1" height="1" fill="#e4e4e4" />
<rect x="34" y="26" width="1" height="1" fill="#e4e4e4" />
<rect x="34" y="23" width="1" height="1" fill="#e4e4e4" />
<rect x="36" y="25" width="1" height="1" fill="#e4e4e4" />
<rect x="36" y="22" width="1" height="1" fill="#e4e4e4" />
<rect x="38" y="24" width="1" height="1" fill="#e4e4e4" />
<rect x="38" y="22" width="1" height="1" fill="#e4e4e4" />
<rect x="40" y="23" width="1" height="1" fill="#e4e4e4" />
<rect x="19" y="17" width="1" height="1" fill="#e4e4e4" />
<rect x="24" y="20" width="1" height="1" fill="#e4e4e4" />
<rect x="31" y="20" width="1" height="1" fill="#e4e4e4" />
<rect x="39" y="30" width="1" height="1" fill="#e4e4e4" />
<rect x="35" y="32" width="1" height="1" fill="#e4e4e4" />
<text y="43.2" font-size="11" fill="#e4e4e4" stroke="#e4e4e4" stroke-width="0.2" font-family='"Liberation Sans", sans-serif'><tspan x="24.3">.</tspan><tspan x="29.6" textLength="10.5" lengthAdjust="spacingAndGlyphs">IR</tspan></text>
</g>
<rect x="104" y="821" width="46" height="48" fill="#9696a0" />
<rect x="105" y="822" width="44" height="46" fill="#191970" />
<g transform="translate(104,821)">
<path d="M5.3 9 Q6.5 15 11.8 21.2 T24 30.4 L28 31" fill="none" stroke="#ffff00" stroke-width="2" shape-rendering="auto"/>
<path d="M12.3 21.2 L16.8 20.4 L16.8 24.5" fill="none" stroke="#ffff00" stroke-width="1"/>
<path d="M11.8 24 L14.2 24 L14.8 30.1 L16 35.1 L16 39.8 L9 39.8 L9 35.1 L10.1 30.1 Z" fill="#ffff00"/>
<text font-size="14" fill="#ffff00" font-family='"Liberation Sans", sans-serif'><tspan x="32.6" y="16.8" textLength="7" lengthAdjust="spacingAndGlyphs">S</tspan><tspan x="32.6" y="28" textLength="7" lengthAdjust="spacingAndGlyphs">U</tspan><tspan x="32.6" y="40.1" textLength="7" lengthAdjust="spacingAndGlyphs">R</tspan></text>
</g>
<rect x="151" y="821" width="46" height="48" fill="#9696a0" />
<rect x="152" y="822" width="44" height="46" fill="#191970" />
<g transform="translate(151,821)">
<rect x="5" y="5" width="1" height="38" fill="#ffff00" />
<rect x="14" y="5" width="1" height="38" fill="#ffff00" />
<rect x="23" y="5" width="1" height="38" fill="#ffff00" />
<rect x="32" y="5" width="1" height="38" fill="#ffff00" />
<rect x="40" y="5" width="1" height="38" fill="#ffff00" />
<rect x="5" y="5" width="36" height="1" fill="#ffff00" />
<rect x="5" y="14" width="36" height="1" fill="#ffff00" />
<rect x="5" y="23" width="36" height="1" fill="#ffff00" />
<rect x="5" y="32" width="36" height="1" fill="#ffff00" />
<rect x="5" y="42" width="36" height="1" fill="#ffff00" />
<path d="M12 9 Q13 14 17.2 19.6 T29.5 30.1 L34.5 31.2" fill="none" stroke="#ffff00" stroke-width="1.8" shape-rendering="auto"/>
<path d="M18.6 22.3 L21.2 22.3 L21.6 30 L22.8 34 L22.8 39.6 L16.1 39.6 L16.1 35 L17.6 30 Z" fill="#ffff00"/>
</g>
<rect x="198" y="821" width="14" height="48" fill="#9696a0" />
<rect x="199" y="822" width="12" height="46" fill="#191970" />
<g transform="translate(198,821)">
<text font-size="6.5" fill="#ffff00" stroke="#ffff00" stroke-width="0.15" text-anchor="middle" font-family='"Liberation Sans", sans-serif'><tspan x="6.9" y="10.8">B</tspan><tspan x="6.9" y="16.9">O</tspan><tspan x="6.9" y="23">U</tspan><tspan x="6.9" y="29.1">N</tspan><tspan x="6.9" y="35.2">D</tspan><tspan x="6.9" y="41.3">S</tspan></text>
</g>
<rect x="213" y="845" width="22" height="24" fill="#9696a0" />
<rect x="214" y="846" width="20" height="22" fill="#191970" />
<g transform="translate(213,845)">
<rect x="3" y="4" width="1" height="16" fill="#ffff00" />
<rect x="8" y="4" width="1" height="16" fill="#ffff00" />
<rect x="13" y="4" width="1" height="16" fill="#ffff00" />
<rect x="18" y="4" width="1" height="16" fill="#ffff00" />
<rect x="3" y="4" width="16" height="1" fill="#ffff00" />
<rect x="3" y="9" width="16" height="1" fill="#ffff00" />
<rect x="3" y="14" width="16" height="1" fill="#ffff00" />
<rect x="3" y="19" width="16" height="1" fill="#ffff00" />
</g>
<rect x="236" y="821" width="21" height="48" fill="#9696a0" />
<rect x="237" y="822" width="19" height="46" fill="#191970" />
<g transform="translate(236,821)">
<path d="M2.8 5.5 L6.5 4 L5.2 7.5 L3.6 10.2 L3 8 Z M3.2 13.2 L5.6 11.6 L6 15 L4.4 14 Z M8.5 5 L11 4.6 L12 7 L14.5 9 L15.6 11 L13.4 12 L13.6 15 L12.4 12.5 L11.6 9.4 L10 7.4 Z M13 4.5 L15 4.2 L14 6.2 Z M16 5 L18 4 L17 6.6 Z" fill="#ffff00"/>
<text font-size="9" fill="#ffff00" stroke="#ffff00" stroke-width="0.15" text-anchor="middle" font-family='"Liberation Sans", sans-serif'><tspan x="10.1" y="24.8">M</tspan><tspan x="10.1" y="32.8">A</tspan><tspan x="10.1" y="41">P</tspan></text>
</g>
<rect x="258" y="821" width="21" height="48" fill="#9696a0" />
<rect x="259" y="822" width="19" height="46" fill="#191970" />
<g transform="translate(258,821)" fill="none" stroke="#ffff00" stroke-width="1" shape-rendering="auto">
<ellipse cx="10.4" cy="23.3" rx="7.4" ry="9.2"/><ellipse cx="10.4" cy="23.3" rx="5" ry="6"/><circle cx="10.4" cy="23.3" r="2.6"/>
<line x1="13.0" y1="23.3" x2="17.8" y2="23.3"/>
<line x1="12.2" y1="25.1" x2="15.6" y2="29.8"/>
<line x1="10.4" y1="25.9" x2="10.4" y2="32.5"/>
<line x1="8.6" y1="25.1" x2="5.2" y2="29.8"/>
<line x1="7.8" y1="23.3" x2="3.0" y2="23.3"/>
<line x1="8.6" y1="21.5" x2="5.2" y2="16.8"/>
<line x1="10.4" y1="20.7" x2="10.4" y2="14.1"/>
<line x1="12.2" y1="21.5" x2="15.6" y2="16.8"/>
</g>
<rect x="280" y="845" width="22" height="24" fill="#9696a0" />
<rect x="281" y="846" width="20" height="22" fill="#191970" />
<circle cx="291.5" cy="857.5" r="7" fill="none" stroke="#ffff00" stroke-width="1.2" shape-rendering="auto"/>
<rect x="303" y="821" width="46" height="48" fill="#9696a0" />
<rect x="304" y="822" width="44" height="46" fill="#191970" />
<g transform="translate(303,821)">
<path d="M5.7 32.5 L39.7 32.5 L37 38.5 L9 38.5 Q5.7 36.5 5.7 32.5 Z" fill="none" stroke="#ffff00" stroke-width="1" shape-rendering="auto"/>
<path d="M8 32 L8 24.5 L12 24.5 L14.3 32" fill="none" stroke="#ffff00" stroke-width="1" shape-rendering="auto"/>
<circle cx="22.2" cy="23.4" r="3.2" fill="none" stroke="#ffff00" stroke-width="1" shape-rendering="auto"/>
<rect x="21" y="26.5" width="2.6" height="6" fill="none" stroke="#ffff00" stroke-width="0.9"/>
<rect x="34" y="16" width="1" height="16" fill="#ffff00" />
<path d="M3 44 L3 40 L5 38.5 L7.5 40.4 L10 38.5 L13 40.4 L16 38.5 L19 40.4 L22 38.5 L25 40.4 L28 38.5 L31 40.4 L34 38.5 L37 40.4 L40 38.5 L42.7 39.5 L42.7 44 Z" fill="#ffff00" shape-rendering="auto"/>
</g>
<rect x="0" y="3" width="573" height="424" fill="#000000" />
<line x1="0" y1="426.5" x2="573" y2="426.5" stroke="#ffffff" stroke-width="1" stroke-dasharray="1 1"/>
<rect x="0" y="427" width="5" height="442" fill="#0000cd" />
<clipPath id="mapclip"><rect x="50" y="34" width="437" height="320"/></clipPath>
<g clip-path="url(#mapclip)" shape-rendering="crispEdges" fill="none" stroke="#ffff00" stroke-width="1" stroke-linejoin="round">
<polyline points="50.0,42.4 60.0,47.0 67.0,52.0 72.0,58.0 82.0,62.0 96.0,63.5 104.0,69.0 113.0,76.0 124.0,79.5 134.0,84.0 143.0,85.5 157.0,93.0 170.0,96.0 185.0,100.3 200.7,92.5 211.7,92.5 219.7,94.3 229.7,100.3 239.6,108.9 248.4,118.1 250.8,121.7 260.2,125.6 274.7,127.5 281.2,129.6 285.5,135.1 293.4,135.7 299.9,139.0 315.8,139.3 318.7,136.1 323.0,141.9 318.7,142.6 348.6,170.8 346.9,183.8 351.2,190.8 358.2,194.6 364.2,190.8 376.4,199.4 380.7,204.7 379.9,212.5 390.3,217.7 402.4,215.9 411.1,219.4 415.5,224.6 421.5,224.6 424.1,233.6 438.0,229.0 429.3,220.3 438.9,214.2 445.8,204.7 451.0,204.7 456.3,208.1 460.6,215.1 464.9,215.4 461.5,220.3 467.5,231.2 477.3,243.7 476.6,254.6 478.0,271.9 476.6,282.7 481.6,288.5 472.3,304.4 462.9,304.7 458.5,313.1 459.2,318.9 452.7,320.6 454.9,327.1 437.9,335.1 436.8,345.6 431.0,350.0"/>
<polyline points="180.7,34.0 190.7,50.0 199.7,52.4 206.7,55.6 212.7,60.3 220.7,59.5 231.6,57.0 244.6,52.0 249.6,52.6 253.7,56.3 262.4,54.5 261.7,50.2 271.0,43.7 273.2,34.3"/>
<polyline points="321.6,34.3 320.1,44.4 318.7,54.5 314.4,64.4 310.8,56.0 307.1,56.7 302.1,62.5 295.6,65.4 294.9,76.2 294.6,97.1"/>
<polyline points="310.8,56.0 310.0,79.8 305.7,89.2 297.8,94.3 303.5,97.1 294.6,97.1"/>
<polyline points="295.6,66.4 266.3,66.4 267.1,74.8 262.4,76.5 268.2,84.2 273.2,87.0 275.8,92.4 255.2,94.7 248.7,105.8 248.4,118.1"/>
<polyline points="303.5,97.1 305.7,99.3 305.0,104.4 293.4,110.1 291.3,119.5 281.2,129.6"/>
<polyline points="291.3,120.7 297.8,126.0 307.1,131.1 311.5,128.5 318.7,136.1"/>
<polyline points="305.7,99.3 310.8,101.5 318.7,97.4 328.1,100.5 343.2,96.4 351.2,97.9 357.0,96.4 372.1,98.2 377.9,105.1 384.4,107.3 386.6,110.9 386.6,122.4 383.7,128.2 383.9,145.6 381.3,152.6 380.4,163.0 377.6,169.0 379.9,176.0 388.5,189.0 397.2,196.0 401.6,197.7 403.6,203.8 410.2,204.7 416.3,208.5 439.8,201.2 443.8,195.6 452.8,195.6 464.9,199.4 473.6,206.4 486.6,222.0"/>
<polyline points="386.6,111.2 378.6,112.6 370.0,117.4 359.9,114.5 355.5,120.3 347.6,124.6 346.6,127.5 343.2,126.5 330.3,136.9 328.8,141.5 323.0,141.9"/>
<polyline points="348.6,171.1 365.1,173.4 371.2,177.7 376.4,178.1 379.9,176.0"/>
<polyline points="401.6,197.7 393.8,198.6 390.3,217.7"/>
<polyline points="473.6,206.4 477.1,220.3 475.3,227.2 467.5,231.2"/>
<polyline points="454.9,327.1 462.1,332.6 471.5,334.8 478.8,341.3 486.7,344.2"/>
<polyline points="463.0,59.5 473.0,55.5 488.0,58.0"/>
<polyline points="488.0,64.0 478.0,68.0 471.7,65.5 463.0,59.5"/>
<polyline points="473.0,34.5 488.0,34.5"/>
<polyline points="258.7,348.7 260.0,345.5 263.0,349.5"/>
</g>
<rect x="121" y="110" width="11" height="1" fill="#faf08c" />
<rect x="126" y="105" width="1" height="11" fill="#faf08c" />
<rect x="121" y="189" width="11" height="1" fill="#faf08c" />
<rect x="126" y="184" width="1" height="11" fill="#faf08c" />
<rect x="121" y="267" width="11" height="1" fill="#faf08c" />
<rect x="126" y="262" width="1" height="11" fill="#faf08c" />
<rect x="121" y="346" width="11" height="1" fill="#faf08c" />
<rect x="126" y="341" width="1" height="11" fill="#faf08c" />
<rect x="199" y="110" width="11" height="1" fill="#faf08c" />
<rect x="204" y="105" width="1" height="11" fill="#faf08c" />
<rect x="199" y="189" width="11" height="1" fill="#faf08c" />
<rect x="204" y="184" width="1" height="11" fill="#faf08c" />
<rect x="199" y="267" width="11" height="1" fill="#faf08c" />
<rect x="204" y="262" width="1" height="11" fill="#faf08c" />
<rect x="199" y="346" width="11" height="1" fill="#faf08c" />
<rect x="204" y="341" width="1" height="11" fill="#faf08c" />
<rect x="277" y="110" width="11" height="1" fill="#faf08c" />
<rect x="282" y="105" width="1" height="11" fill="#faf08c" />
<rect x="277" y="189" width="11" height="1" fill="#faf08c" />
<rect x="282" y="184" width="1" height="11" fill="#faf08c" />
<rect x="277" y="267" width="11" height="1" fill="#faf08c" />
<rect x="282" y="262" width="1" height="11" fill="#faf08c" />
<rect x="277" y="346" width="11" height="1" fill="#faf08c" />
<rect x="282" y="341" width="1" height="11" fill="#faf08c" />
<rect x="354" y="110" width="11" height="1" fill="#faf08c" />
<rect x="359" y="105" width="1" height="11" fill="#faf08c" />
<rect x="354" y="189" width="11" height="1" fill="#faf08c" />
<rect x="359" y="184" width="1" height="11" fill="#faf08c" />
<rect x="354" y="267" width="11" height="1" fill="#faf08c" />
<rect x="359" y="262" width="1" height="11" fill="#faf08c" />
<rect x="354" y="346" width="11" height="1" fill="#faf08c" />
<rect x="359" y="341" width="1" height="11" fill="#faf08c" />
<rect x="432" y="110" width="11" height="1" fill="#faf08c" />
<rect x="437" y="105" width="1" height="11" fill="#faf08c" />
<rect x="432" y="189" width="11" height="1" fill="#faf08c" />
<rect x="437" y="184" width="1" height="11" fill="#faf08c" />
<rect x="432" y="267" width="11" height="1" fill="#faf08c" />
<rect x="437" y="262" width="1" height="11" fill="#faf08c" />
<rect x="432" y="346" width="11" height="1" fill="#faf08c" />
<rect x="437" y="341" width="1" height="11" fill="#faf08c" />
<rect x="271" y="212" width="1" height="1" fill="#00e896" />
<rect x="274" y="215" width="2" height="2" fill="#00e896" />
<rect x="262" y="224" width="1" height="2" fill="#00e896" />
<rect x="262" y="230" width="3" height="1" fill="#00e896" />
<rect x="264" y="231" width="1" height="2" fill="#00e896" />
<rect x="276" y="229" width="1" height="2" fill="#00e896" />
<rect x="226" y="231" width="2" height="1" fill="#00e896" />
<rect x="225" y="237" width="1" height="1" fill="#00e896" />
<rect x="259" y="242" width="1" height="1" fill="#00e896" />
<rect x="270" y="219" width="1" height="1" fill="#00e896" />
<rect x="204" y="213" width="1" height="1" fill="#ff00ff" />
<rect x="202" y="214" width="5" height="1" fill="#ff00ff" />
<rect x="202" y="215" width="5" height="1" fill="#ff00ff" />
<rect x="202" y="216" width="1" height="1" fill="#ff00ff" />
<rect x="204" y="216" width="1" height="1" fill="#ff00ff" />
<rect x="206" y="216" width="1" height="1" fill="#ff00ff" />
<rect x="202" y="217" width="1" height="1" fill="#ff00ff" />
<rect x="204" y="217" width="1" height="1" fill="#ff00ff" />
<rect x="206" y="217" width="1" height="1" fill="#ff00ff" />
<rect x="202" y="218" width="1" height="1" fill="#ff00ff" />
<rect x="204" y="218" width="1" height="1" fill="#ff00ff" />
<rect x="206" y="218" width="1" height="1" fill="#ff00ff" />
<rect x="201" y="219" width="7" height="1" fill="#ff00ff" />
<rect x="201" y="220" width="7" height="1" fill="#ff00ff" />
<rect x="204" y="221" width="1" height="1" fill="#ff00ff" />
<rect x="204" y="222" width="1" height="1" fill="#ff00ff" />
<rect x="200" y="223" width="9" height="1" fill="#ff00ff" />
<rect x="196" y="224" width="1" height="1" fill="#ff00ff" />
<rect x="199" y="224" width="3" height="1" fill="#ff00ff" />
<rect x="203" y="224" width="3" height="1" fill="#ff00ff" />
<rect x="207" y="224" width="2" height="1" fill="#ff00ff" />
<rect x="196" y="225" width="1" height="1" fill="#ff00ff" />
<rect x="198" y="225" width="1" height="1" fill="#ff00ff" />
<rect x="202" y="225" width="2" height="1" fill="#ff00ff" />
<rect x="205" y="225" width="2" height="1" fill="#ff00ff" />
<rect x="208" y="225" width="2" height="1" fill="#ff00ff" />
<rect x="211" y="225" width="2" height="1" fill="#ff00ff" />
<rect x="197" y="226" width="1" height="1" fill="#ff00ff" />
<rect x="200" y="226" width="2" height="1" fill="#ff00ff" />
<rect x="204" y="226" width="1" height="1" fill="#ff00ff" />
<rect x="207" y="226" width="1" height="1" fill="#ff00ff" />
<rect x="210" y="226" width="1" height="1" fill="#ff00ff" />
<rect x="204" y="260" width="1" height="1" fill="#ff00ff" />
<rect x="202" y="261" width="5" height="1" fill="#ff00ff" />
<rect x="202" y="262" width="5" height="1" fill="#ff00ff" />
<rect x="202" y="263" width="1" height="1" fill="#ff00ff" />
<rect x="204" y="263" width="1" height="1" fill="#ff00ff" />
<rect x="206" y="263" width="1" height="1" fill="#ff00ff" />
<rect x="202" y="264" width="1" height="1" fill="#ff00ff" />
<rect x="204" y="264" width="1" height="1" fill="#ff00ff" />
<rect x="206" y="264" width="1" height="1" fill="#ff00ff" />
<rect x="202" y="265" width="1" height="1" fill="#ff00ff" />
<rect x="204" y="265" width="1" height="1" fill="#ff00ff" />
<rect x="206" y="265" width="1" height="1" fill="#ff00ff" />
<rect x="201" y="266" width="7" height="1" fill="#ff00ff" />
<rect x="201" y="267" width="7" height="1" fill="#ff00ff" />
<rect x="204" y="268" width="1" height="1" fill="#ff00ff" />
<rect x="204" y="269" width="1" height="1" fill="#ff00ff" />
<rect x="200" y="270" width="9" height="1" fill="#ff00ff" />
<rect x="196" y="271" width="1" height="1" fill="#ff00ff" />
<rect x="199" y="271" width="3" height="1" fill="#ff00ff" />
<rect x="203" y="271" width="3" height="1" fill="#ff00ff" />
<rect x="207" y="271" width="2" height="1" fill="#ff00ff" />
<rect x="196" y="272" width="1" height="1" fill="#ff00ff" />
<rect x="198" y="272" width="1" height="1" fill="#ff00ff" />
<rect x="202" y="272" width="2" height="1" fill="#ff00ff" />
<rect x="205" y="272" width="2" height="1" fill="#ff00ff" />
<rect x="208" y="272" width="2" height="1" fill="#ff00ff" />
<rect x="211" y="272" width="2" height="1" fill="#ff00ff" />
<rect x="197" y="273" width="1" height="1" fill="#ff00ff" />
<rect x="200" y="273" width="2" height="1" fill="#ff00ff" />
<rect x="204" y="273" width="1" height="1" fill="#ff00ff" />
<rect x="207" y="273" width="1" height="1" fill="#ff00ff" />
<rect x="210" y="273" width="1" height="1" fill="#ff00ff" />
<rect x="204" y="308" width="1" height="1" fill="#ff00ff" />
<rect x="202" y="309" width="5" height="1" fill="#ff00ff" />
<rect x="202" y="310" width="5" height="1" fill="#ff00ff" />
<rect x="202" y="311" width="1" height="1" fill="#ff00ff" />
<rect x="204" y="311" width="1" height="1" fill="#ff00ff" />
<rect x="206" y="311" width="1" height="1" fill="#ff00ff" />
<rect x="202" y="312" width="1" height="1" fill="#ff00ff" />
<rect x="204" y="312" width="1" height="1" fill="#ff00ff" />
<rect x="206" y="312" width="1" height="1" fill="#ff00ff" />
<rect x="202" y="313" width="1" height="1" fill="#ff00ff" />
<rect x="204" y="313" width="1" height="1" fill="#ff00ff" />
<rect x="206" y="313" width="1" height="1" fill="#ff00ff" />
<rect x="201" y="314" width="7" height="1" fill="#ff00ff" />
<rect x="201" y="315" width="7" height="1" fill="#ff00ff" />
<rect x="204" y="316" width="1" height="1" fill="#ff00ff" />
<rect x="204" y="317" width="1" height="1" fill="#ff00ff" />
<rect x="200" y="318" width="9" height="1" fill="#ff00ff" />
<rect x="196" y="319" width="1" height="1" fill="#ff00ff" />
<rect x="199" y="319" width="3" height="1" fill="#ff00ff" />
<rect x="203" y="319" width="3" height="1" fill="#ff00ff" />
<rect x="207" y="319" width="2" height="1" fill="#ff00ff" />
<rect x="196" y="320" width="1" height="1" fill="#ff00ff" />
<rect x="198" y="320" width="1" height="1" fill="#ff00ff" />
<rect x="202" y="320" width="2" height="1" fill="#ff00ff" />
<rect x="205" y="320" width="2" height="1" fill="#ff00ff" />
<rect x="208" y="320" width="2" height="1" fill="#ff00ff" />
<rect x="211" y="320" width="2" height="1" fill="#ff00ff" />
<rect x="197" y="321" width="1" height="1" fill="#ff00ff" />
<rect x="200" y="321" width="2" height="1" fill="#ff00ff" />
<rect x="204" y="321" width="1" height="1" fill="#ff00ff" />
<rect x="207" y="321" width="1" height="1" fill="#ff00ff" />
<rect x="210" y="321" width="1" height="1" fill="#ff00ff" />
<rect x="204" y="339" width="1" height="1" fill="#ff00ff" />
<rect x="202" y="340" width="5" height="1" fill="#ff00ff" />
<rect x="202" y="341" width="5" height="1" fill="#ff00ff" />
<rect x="202" y="342" width="1" height="1" fill="#ff00ff" />
<rect x="204" y="342" width="1" height="1" fill="#ff00ff" />
<rect x="206" y="342" width="1" height="1" fill="#ff00ff" />
<rect x="202" y="343" width="1" height="1" fill="#ff00ff" />
<rect x="204" y="343" width="1" height="1" fill="#ff00ff" />
<rect x="206" y="343" width="1" height="1" fill="#ff00ff" />
<rect x="202" y="344" width="1" height="1" fill="#ff00ff" />
<rect x="204" y="344" width="1" height="1" fill="#ff00ff" />
<rect x="206" y="344" width="1" height="1" fill="#ff00ff" />
<rect x="201" y="345" width="7" height="1" fill="#ff00ff" />
<rect x="201" y="346" width="7" height="1" fill="#ff00ff" />
<rect x="204" y="347" width="1" height="1" fill="#ff00ff" />
<rect x="204" y="348" width="1" height="1" fill="#ff00ff" />
<rect x="200" y="349" width="9" height="1" fill="#ff00ff" />
<rect x="196" y="350" width="1" height="1" fill="#ff00ff" />
<rect x="199" y="350" width="3" height="1" fill="#ff00ff" />
<rect x="203" y="350" width="3" height="1" fill="#ff00ff" />
<rect x="207" y="350" width="2" height="1" fill="#ff00ff" />
<rect x="196" y="351" width="1" height="1" fill="#ff00ff" />
<rect x="198" y="351" width="1" height="1" fill="#ff00ff" />
<rect x="202" y="351" width="2" height="1" fill="#ff00ff" />
<rect x="205" y="351" width="2" height="1" fill="#ff00ff" />
<rect x="208" y="351" width="2" height="1" fill="#ff00ff" />
<rect x="211" y="351" width="2" height="1" fill="#ff00ff" />
<rect x="197" y="352" width="1" height="1" fill="#ff00ff" />
<rect x="200" y="352" width="2" height="1" fill="#ff00ff" />
<rect x="204" y="352" width="1" height="1" fill="#ff00ff" />
<rect x="207" y="352" width="1" height="1" fill="#ff00ff" />
<rect x="210" y="352" width="1" height="1" fill="#ff00ff" />
<text x="33.5" y="110.3" font-size="18" fill="#faf08c" font-family='"Liberation Sans", sans-serif' stroke="#faf08c" stroke-width="0.4" stroke-linejoin="round" text-anchor="end"  xml:space="preserve">15</text>
<text x="33.5" y="189.3" font-size="18" fill="#faf08c" font-family='"Liberation Sans", sans-serif' stroke="#faf08c" stroke-width="0.4" stroke-linejoin="round" text-anchor="end"  xml:space="preserve">10</text>
<text x="33.5" y="267.3" font-size="18" fill="#faf08c" font-family='"Liberation Sans", sans-serif' stroke="#faf08c" stroke-width="0.4" stroke-linejoin="round" text-anchor="end"  xml:space="preserve">5</text>
<text x="33.5" y="346.3" font-size="18" fill="#faf08c" font-family='"Liberation Sans", sans-serif' stroke="#faf08c" stroke-width="0.4" stroke-linejoin="round" text-anchor="end"  xml:space="preserve">0</text>
<text y="372.4" font-size="18" font-family='"Liberation Sans", sans-serif' stroke-linejoin="round" xml:space="preserve"><tspan x="106.90" textLength="8.09" lengthAdjust="spacingAndGlyphs" fill="#faf08c" stroke="#faf08c" stroke-width="0.4">-</tspan><tspan x="117.80" textLength="28.46" lengthAdjust="spacingAndGlyphs" fill="#faf08c" stroke="#faf08c" stroke-width="0.4">100</tspan></text>
<text y="372.4" font-size="18" font-family='"Liberation Sans", sans-serif' stroke-linejoin="round" xml:space="preserve"><tspan x="190.60" textLength="7.79" lengthAdjust="spacingAndGlyphs" fill="#faf08c" stroke="#faf08c" stroke-width="0.4">-</tspan><tspan x="200.60" textLength="18.81" lengthAdjust="spacingAndGlyphs" fill="#faf08c" stroke="#faf08c" stroke-width="0.4">95</tspan></text>
<text y="372.4" font-size="18" font-family='"Liberation Sans", sans-serif' stroke-linejoin="round" xml:space="preserve"><tspan x="268.75" textLength="7.84" lengthAdjust="spacingAndGlyphs" fill="#faf08c" stroke="#faf08c" stroke-width="0.4">-</tspan><tspan x="278.75" textLength="18.76" lengthAdjust="spacingAndGlyphs" fill="#faf08c" stroke="#faf08c" stroke-width="0.4">90</tspan></text>
<text y="372.4" font-size="18" font-family='"Liberation Sans", sans-serif' stroke-linejoin="round" xml:space="preserve"><tspan x="345.30" textLength="8.44" lengthAdjust="spacingAndGlyphs" fill="#faf08c" stroke="#faf08c" stroke-width="0.4">-</tspan><tspan x="355.60" textLength="18.81" lengthAdjust="spacingAndGlyphs" fill="#faf08c" stroke="#faf08c" stroke-width="0.4">85</tspan></text>
<text y="372.4" font-size="18" font-family='"Liberation Sans", sans-serif' stroke-linejoin="round" xml:space="preserve"><tspan x="423.40" textLength="7.84" lengthAdjust="spacingAndGlyphs" fill="#faf08c" stroke="#faf08c" stroke-width="0.4">-</tspan><tspan x="433.75" textLength="18.76" lengthAdjust="spacingAndGlyphs" fill="#faf08c" stroke="#faf08c" stroke-width="0.4">80</tspan></text>
<text y="27" font-size="25" font-family='"Liberation Sans", sans-serif' stroke-linejoin="round" xml:space="preserve"><tspan x="10.60" textLength="20.78" lengthAdjust="spacingAndGlyphs" fill="#ffff00" stroke="#ffff00" stroke-width="0.5">31</tspan><tspan x="35.17" textLength="15.22" lengthAdjust="spacingAndGlyphs" fill="#ffff00" stroke="#ffff00" stroke-width="0.5">-</tspan><tspan x="52.58" textLength="24.44" lengthAdjust="spacingAndGlyphs" fill="#ffff00" stroke="#ffff00" stroke-width="0.5">jul</tspan><tspan x="76.60" textLength="15.82" lengthAdjust="spacingAndGlyphs" fill="#ffff00" stroke="#ffff00" stroke-width="0.5">-</tspan><tspan x="96.01" textLength="49.60" lengthAdjust="spacingAndGlyphs" fill="#ffff00" stroke="#ffff00" stroke-width="0.5">1997</tspan><tspan x="145.10" textLength="7.64" lengthAdjust="spacingAndGlyphs" fill="#ffff00" stroke="#ffff00" stroke-width="0.5">,</tspan><tspan x="153.97" textLength="22.97" lengthAdjust="spacingAndGlyphs" fill="#ffff00" stroke="#ffff00" stroke-width="0.5">12</tspan><tspan x="177.63" textLength="5.79" lengthAdjust="spacingAndGlyphs" fill="#ffff00" stroke="#ffff00" stroke-width="0.5">:</tspan><tspan x="185.00" textLength="24.81" lengthAdjust="spacingAndGlyphs" fill="#ffff00" stroke="#ffff00" stroke-width="0.5">05</tspan><tspan x="211.83" textLength="5.79" lengthAdjust="spacingAndGlyphs" fill="#ffff00" stroke="#ffff00" stroke-width="0.5">:</tspan><tspan x="219.00" textLength="20.88" lengthAdjust="spacingAndGlyphs" fill="#ffff00" stroke="#ffff00" stroke-width="0.5">00</tspan>  <tspan x="253.10" textLength="9.73" lengthAdjust="spacingAndGlyphs" fill="#ffffff" stroke="#ffffff" stroke-width="0.5">ir</tspan> <tspan x="272.90" textLength="47.03" lengthAdjust="spacingAndGlyphs" fill="#ffffff" stroke="#ffffff" stroke-width="0.5">plot.</tspan>  <tspan x="332.39" textLength="43.88" lengthAdjust="spacingAndGlyphs" fill="#ffffff" stroke="#ffffff" stroke-width="0.5">Rhb</tspan><tspan x="376.29" textLength="12.43" lengthAdjust="spacingAndGlyphs" fill="#ffffff" stroke="#ffffff" stroke-width="0.5">_</tspan><tspan x="390.47" textLength="68.47" lengthAdjust="spacingAndGlyphs" fill="#ffffff" stroke="#ffffff" stroke-width="0.5">lowprf</tspan> <tspan x="465.06" textLength="69.41" lengthAdjust="spacingAndGlyphs" fill="#ffffff" stroke="#ffffff" stroke-width="0.5">maxdz</tspan></text>
<text y="56.5" font-size="25" font-family='"Liberation Sans", sans-serif' stroke-linejoin="round" xml:space="preserve"><tspan x="11.30" textLength="50.79" lengthAdjust="spacingAndGlyphs" fill="#ffffff" stroke="#ffffff" stroke-width="0.5">filled</tspan> <tspan x="69.51" textLength="88.43" lengthAdjust="spacingAndGlyphs" fill="#ffffff" stroke="#ffffff" stroke-width="0.5">contour.</tspan></text>
<rect x="487" y="34" width="85" height="1" fill="#a0a0a0" />
<text x="490" y="47" font-size="18" fill="#ffffff" font-family='"Liberation Sans", sans-serif' stroke="#ffffff" stroke-width="0.4" stroke-linejoin="round" textLength="9" lengthAdjust="spacingAndGlyphs"  xml:space="preserve">ir</text>
<linearGradient id="irg" x1="0" y1="0" x2="0" y2="1"><stop offset="0" stop-color="#161616"/><stop offset="1" stop-color="#d2d2d2"/></linearGradient>
<rect x="489" y="60" width="10" height="95" fill="url(#irg)" />
<rect x="489" y="155" width="10" height="16" fill="#0000ff" />
<rect x="489" y="171" width="10" height="5" fill="#ff0000" />
<rect x="489" y="171" width="10" height="1" fill="#ffffff" />
<rect x="489" y="176" width="10" height="4" fill="#ff9000" />
<rect x="489" y="180" width="10" height="4" fill="#ffc0cb" />
<rect x="489" y="184" width="10" height="4" fill="#ffff00" />
<text x="505" y="68" font-size="18" fill="#ffffff" font-family='"Liberation Sans", sans-serif' stroke="#ffffff" stroke-width="0.4" stroke-linejoin="round" textLength="43" lengthAdjust="spacingAndGlyphs"  xml:space="preserve">387.0</text>
<text x="505" y="90.4" font-size="18" fill="#ffffff" font-family='"Liberation Sans", sans-serif' stroke="#ffffff" stroke-width="0.4" stroke-linejoin="round" textLength="43" lengthAdjust="spacingAndGlyphs"  xml:space="preserve">351.0</text>
<text x="505" y="112.8" font-size="18" fill="#ffffff" font-family='"Liberation Sans", sans-serif' stroke="#ffffff" stroke-width="0.4" stroke-linejoin="round" textLength="43" lengthAdjust="spacingAndGlyphs"  xml:space="preserve">315.0</text>
<text x="505" y="135.2" font-size="18" fill="#ffffff" font-family='"Liberation Sans", sans-serif' stroke="#ffffff" stroke-width="0.4" stroke-linejoin="round" textLength="43" lengthAdjust="spacingAndGlyphs"  xml:space="preserve">279.0</text>
<text x="505" y="157.6" font-size="18" fill="#ffffff" font-family='"Liberation Sans", sans-serif' stroke="#ffffff" stroke-width="0.4" stroke-linejoin="round" textLength="43" lengthAdjust="spacingAndGlyphs"  xml:space="preserve">243.0</text>
<text x="505" y="180" font-size="18" fill="#ffffff" font-family='"Liberation Sans", sans-serif' stroke="#ffffff" stroke-width="0.4" stroke-linejoin="round" textLength="43" lengthAdjust="spacingAndGlyphs"  xml:space="preserve">207.0</text>
<rect x="487" y="237" width="85" height="1" fill="#a0a0a0" />
<text x="490" y="257.5" font-size="18" fill="#ffffff" font-family='"Liberation Sans", sans-serif' stroke="#ffffff" stroke-width="0.4" stroke-linejoin="round" textLength="51" lengthAdjust="spacingAndGlyphs"  xml:space="preserve">maxdz</text>
<rect x="489" y="263" width="10" height="28" fill="#b22222" />
<rect x="489" y="291" width="10" height="28" fill="#ffa07a" />
<rect x="489" y="319" width="10" height="28" fill="#f8f878" />
<rect x="489" y="347" width="10" height="28" fill="#00fa9a" />
<text x="504.5" y="284.2" font-size="18" fill="#ffffff" font-family='"Liberation Sans", sans-serif' stroke="#ffffff" stroke-width="0.4" stroke-linejoin="round" textLength="34" lengthAdjust="spacingAndGlyphs"  xml:space="preserve">55.0</text>
<text x="504.5" y="312.2" font-size="18" fill="#ffffff" font-family='"Liberation Sans", sans-serif' stroke="#ffffff" stroke-width="0.4" stroke-linejoin="round" textLength="34" lengthAdjust="spacingAndGlyphs"  xml:space="preserve">45.0</text>
<text x="504.5" y="340.2" font-size="18" fill="#ffffff" font-family='"Liberation Sans", sans-serif' stroke="#ffffff" stroke-width="0.4" stroke-linejoin="round" textLength="34" lengthAdjust="spacingAndGlyphs"  xml:space="preserve">35.0</text>
<text x="504.5" y="368.2" font-size="18" fill="#ffffff" font-family='"Liberation Sans", sans-serif' stroke="#ffffff" stroke-width="0.4" stroke-linejoin="round" textLength="34" lengthAdjust="spacingAndGlyphs"  xml:space="preserve">25.0</text>
<rect x="487" y="375" width="85" height="1" fill="#a0a0a0" />
<rect x="5" y="376" width="46" height="48" fill="#9696a0" />
<rect x="6" y="377" width="44" height="46" fill="#191970" />
<g transform="translate(5,376)" shape-rendering="auto" fill="none" stroke="#ffff00" stroke-linecap="round" stroke-linejoin="round">
<path d="M7.1 12.6 C7.5 10.5 11 8 15.7 7.6 C20 7.6 24 10.6 28.4 11.5 C32 12.2 36 11.4 37.9 9" stroke-width="2.1"/>
<path d="M37.6 9.5 C36 14 30 17.5 22.9 21.2 C17 25 12 33 6.2 39.6" stroke-width="1.7"/>
<path d="M6.2 39.6 C9 37.5 13 36 20.1 36.8 C24 37.5 26 39.8 30 40.2 C34 40.3 37 38.5 38.7 35.1" stroke-width="2.1"/>
</g>
<rect x="52" y="376" width="46" height="48" fill="#9696a0" />
<rect x="53" y="377" width="44" height="46" fill="#191970" />
<g transform="translate(52,376)">
<text x="2.9" y="15" font-size="15" fill="#ffff00" font-family='"Liberation Sans", sans-serif' stroke="#ffff00" stroke-width="0.3" stroke-linejoin="round" textLength="30.5" lengthAdjust="spacingAndGlyphs" font-weight="bold"  xml:space="preserve">GOES</text>
<path d="M3 17 L8 17 Q20 21 24 32 L24 36 L23 44 L3 44 Z" fill="url(#stipY)"/>
<path d="M13 21 L17.3 19.5 L23 28 L24 33.5 L18.4 31 L13.4 27.3 L15.7 24 Z" fill="#ffff00"/>
<path d="M3 37.3 L7.9 36.8 L12.3 39.5 L12.3 44 L3 44 Z" fill="#ffff00"/>
<path d="M3 17 L8 17 L5.5 20.5 L3 20 Z M3 28.4 L5.5 30 L3 32 Z" fill="#ffff00"/>
<path d="M40.4 18.6 L43.3 21.5 L40.4 24.4 L37.5 21.5 Z" fill="#ffff00"/>
<rect x="22" y="24" width="1" height="1" fill="#ffff00" />
<rect x="24" y="31" width="1" height="1" fill="#ffff00" />
<rect x="24" y="24" width="1" height="1" fill="#ffff00" />
<rect x="26" y="30" width="1" height="1" fill="#ffff00" />
<rect x="26" y="24" width="1" height="1" fill="#ffff00" />
<rect x="28" y="29" width="1" height="1" fill="#ffff00" />
<rect x="28" y="24" width="1" height="1" fill="#ffff00" />
<rect x="30" y="28" width="1" height="1" fill="#ffff00" />
<rect x="30" y="23" width="1" height="1" fill="#ffff00" />
<rect x="32" y="27" width="1" height="1" fill="#ffff00" />
<rect x="32" y="23" width="1" height="1" fill="#ffff00" />
<rect x="34" y="26" width="1" height="1" fill="#ffff00" />
<rect x="34" y="23" width="1" height="1" fill="#ffff00" />
<rect x="36" y="25" width="1" height="1" fill="#ffff00" />
<rect x="36" y="22" width="1" height="1" fill="#ffff00" />
<rect x="38" y="24" width="1" height="1" fill="#ffff00" />
<rect x="38" y="22" width="1" height="1" fill="#ffff00" />
<rect x="40" y="23" width="1" height="1" fill="#ffff00" />
<rect x="19" y="17" width="1" height="1" fill="#ffff00" />
<rect x="24" y="20" width="1" height="1" fill="#ffff00" />
<rect x="31" y="20" width="1" height="1" fill="#ffff00" />
<rect x="39" y="30" width="1" height="1" fill="#ffff00" />
<rect x="35" y="32" width="1" height="1" fill="#ffff00" />
<text y="43.2" font-size="11" fill="#ffff00" stroke="#ffff00" stroke-width="0.2" font-family='"Liberation Sans", sans-serif'><tspan x="24.3">.</tspan><tspan x="29.6" textLength="10.5" lengthAdjust="spacingAndGlyphs">IR</tspan></text>
</g>
<rect x="99" y="376" width="46" height="48" fill="#9696a0" />
<rect x="100" y="377" width="44" height="46" fill="#191970" />
<g transform="translate(99,376)">
<path d="M5.3 9 Q6.5 15 11.8 21.2 T24 30.4 L28 31" fill="none" stroke="#ffff00" stroke-width="2" shape-rendering="auto"/>
<path d="M12.3 21.2 L16.8 20.4 L16.8 24.5" fill="none" stroke="#ffff00" stroke-width="1"/>
<path d="M11.8 24 L14.2 24 L14.8 30.1 L16 35.1 L16 39.8 L9 39.8 L9 35.1 L10.1 30.1 Z" fill="#ffff00"/>
<text font-size="14" fill="#ffff00" font-family='"Liberation Sans", sans-serif'><tspan x="32.6" y="16.8" textLength="7" lengthAdjust="spacingAndGlyphs">S</tspan><tspan x="32.6" y="28" textLength="7" lengthAdjust="spacingAndGlyphs">U</tspan><tspan x="32.6" y="40.1" textLength="7" lengthAdjust="spacingAndGlyphs">R</tspan></text>
</g>
<rect x="146" y="376" width="46" height="48" fill="#9a9a9a" />
<rect x="147" y="377" width="44" height="46" fill="#686868" />
<g transform="translate(146,376)">
<rect x="5" y="5" width="1" height="38" fill="#e4e4e4" />
<rect x="14" y="5" width="1" height="38" fill="#e4e4e4" />
<rect x="23" y="5" width="1" height="38" fill="#e4e4e4" />
<rect x="32" y="5" width="1" height="38" fill="#e4e4e4" />
<rect x="40" y="5" width="1" height="38" fill="#e4e4e4" />
<rect x="5" y="5" width="36" height="1" fill="#e4e4e4" />
<rect x="5" y="14" width="36" height="1" fill="#e4e4e4" />
<rect x="5" y="23" width="36" height="1" fill="#e4e4e4" />
<rect x="5" y="32" width="36" height="1" fill="#e4e4e4" />
<rect x="5" y="42" width="36" height="1" fill="#e4e4e4" />
<path d="M12 9 Q13 14 17.2 19.6 T29.5 30.1 L34.5 31.2" fill="none" stroke="#e4e4e4" stroke-width="1.8" shape-rendering="auto"/>
<path d="M18.6 22.3 L21.2 22.3 L21.6 30 L22.8 34 L22.8 39.6 L16.1 39.6 L16.1 35 L17.6 30 Z" fill="#e4e4e4"/>
</g>
<rect x="193" y="376" width="14" height="48" fill="#9a9a9a" />
<rect x="194" y="377" width="12" height="46" fill="#686868" />
<g transform="translate(193,376)">
<text font-size="6.5" fill="#e4e4e4" stroke="#e4e4e4" stroke-width="0.15" text-anchor="middle" font-family='"Liberation Sans", sans-serif'><tspan x="6.9" y="10.8">B</tspan><tspan x="6.9" y="16.9">O</tspan><tspan x="6.9" y="23">U</tspan><tspan x="6.9" y="29.1">N</tspan><tspan x="6.9" y="35.2">D</tspan><tspan x="6.9" y="41.3">S</tspan></text>
</g>
<rect x="208" y="400" width="22" height="24" fill="#9696a0" />
<rect x="209" y="401" width="20" height="22" fill="#191970" />
<g transform="translate(208,400)">
<rect x="3" y="4" width="1" height="16" fill="#ffff00" />
<rect x="8" y="4" width="1" height="16" fill="#ffff00" />
<rect x="13" y="4" width="1" height="16" fill="#ffff00" />
<rect x="18" y="4" width="1" height="16" fill="#ffff00" />
<rect x="3" y="4" width="16" height="1" fill="#ffff00" />
<rect x="3" y="9" width="16" height="1" fill="#ffff00" />
<rect x="3" y="14" width="16" height="1" fill="#ffff00" />
<rect x="3" y="19" width="16" height="1" fill="#ffff00" />
</g>
<rect x="231" y="376" width="21" height="48" fill="#9696a0" />
<rect x="232" y="377" width="19" height="46" fill="#191970" />
<g transform="translate(231,376)">
<path d="M2.8 5.5 L6.5 4 L5.2 7.5 L3.6 10.2 L3 8 Z M3.2 13.2 L5.6 11.6 L6 15 L4.4 14 Z M8.5 5 L11 4.6 L12 7 L14.5 9 L15.6 11 L13.4 12 L13.6 15 L12.4 12.5 L11.6 9.4 L10 7.4 Z M13 4.5 L15 4.2 L14 6.2 Z M16 5 L18 4 L17 6.6 Z" fill="#ffff00"/>
<text font-size="9" fill="#ffff00" stroke="#ffff00" stroke-width="0.15" text-anchor="middle" font-family='"Liberation Sans", sans-serif'><tspan x="10.1" y="24.8">M</tspan><tspan x="10.1" y="32.8">A</tspan><tspan x="10.1" y="41">P</tspan></text>
</g>
<rect x="253" y="376" width="21" height="48" fill="#9a9a9a" />
<rect x="254" y="377" width="19" height="46" fill="#686868" />
<g transform="translate(253,376)" fill="none" stroke="#e4e4e4" stroke-width="1" shape-rendering="auto">
<ellipse cx="10.4" cy="23.3" rx="7.4" ry="9.2"/><ellipse cx="10.4" cy="23.3" rx="5" ry="6"/><circle cx="10.4" cy="23.3" r="2.6"/>
<line x1="13.0" y1="23.3" x2="17.8" y2="23.3"/>
<line x1="12.2" y1="25.1" x2="15.6" y2="29.8"/>
<line x1="10.4" y1="25.9" x2="10.4" y2="32.5"/>
<line x1="8.6" y1="25.1" x2="5.2" y2="29.8"/>
<line x1="7.8" y1="23.3" x2="3.0" y2="23.3"/>
<line x1="8.6" y1="21.5" x2="5.2" y2="16.8"/>
<line x1="10.4" y1="20.7" x2="10.4" y2="14.1"/>
<line x1="12.2" y1="21.5" x2="15.6" y2="16.8"/>
</g>
<rect x="275" y="400" width="22" height="24" fill="#9696a0" />
<rect x="276" y="401" width="20" height="22" fill="#191970" />
<rect x="286" y="405" width="1" height="1" fill="#ffff00" />
<rect x="284" y="406" width="5" height="1" fill="#ffff00" />
<rect x="284" y="407" width="5" height="1" fill="#ffff00" />
<rect x="284" y="408" width="1" height="1" fill="#ffff00" />
<rect x="286" y="408" width="1" height="1" fill="#ffff00" />
<rect x="288" y="408" width="1" height="1" fill="#ffff00" />
<rect x="284" y="409" width="1" height="1" fill="#ffff00" />
<rect x="286" y="409" width="1" height="1" fill="#ffff00" />
<rect x="288" y="409" width="1" height="1" fill="#ffff00" />
<rect x="284" y="410" width="1" height="1" fill="#ffff00" />
<rect x="286" y="410" width="1" height="1" fill="#ffff00" />
<rect x="288" y="410" width="1" height="1" fill="#ffff00" />
<rect x="283" y="411" width="7" height="1" fill="#ffff00" />
<rect x="283" y="412" width="7" height="1" fill="#ffff00" />
<rect x="286" y="413" width="1" height="1" fill="#ffff00" />
<rect x="286" y="414" width="1" height="1" fill="#ffff00" />
<rect x="282" y="415" width="9" height="1" fill="#ffff00" />
<rect x="278" y="416" width="1" height="1" fill="#ffff00" />
<rect x="281" y="416" width="3" height="1" fill="#ffff00" />
<rect x="285" y="416" width="3" height="1" fill="#ffff00" />
<rect x="289" y="416" width="2" height="1" fill="#ffff00" />
<rect x="278" y="417" width="1" height="1" fill="#ffff00" />
<rect x="280" y="417" width="1" height="1" fill="#ffff00" />
<rect x="284" y="417" width="2" height="1" fill="#ffff00" />
<rect x="287" y="417" width="2" height="1" fill="#ffff00" />
<rect x="290" y="417" width="2" height="1" fill="#ffff00" />
<rect x="293" y="417" width="2" height="1" fill="#ffff00" />
<rect x="279" y="418" width="1" height="1" fill="#ffff00" />
<rect x="282" y="418" width="2" height="1" fill="#ffff00" />
<rect x="286" y="418" width="1" height="1" fill="#ffff00" />
<rect x="289" y="418" width="1" height="1" fill="#ffff00" />
<rect x="292" y="418" width="1" height="1" fill="#ffff00" />
<rect x="298" y="376" width="46" height="48" fill="#9a9a9a" />
<rect x="299" y="377" width="44" height="46" fill="#686868" />
<g transform="translate(298,376)">
<path d="M5.7 32.5 L39.7 32.5 L37 38.5 L9 38.5 Q5.7 36.5 5.7 32.5 Z" fill="none" stroke="#e4e4e4" stroke-width="1" shape-rendering="auto"/>
<path d="M8 32 L8 24.5 L12 24.5 L14.3 32" fill="none" stroke="#e4e4e4" stroke-width="1" shape-rendering="auto"/>
<circle cx="22.2" cy="23.4" r="3.2" fill="none" stroke="#e4e4e4" stroke-width="1" shape-rendering="auto"/>
<rect x="21" y="26.5" width="2.6" height="6" fill="none" stroke="#e4e4e4" stroke-width="0.9"/>
<rect x="34" y="16" width="1" height="16" fill="#e4e4e4" />
<path d="M3 44 L3 40 L5 38.5 L7.5 40.4 L10 38.5 L13 40.4 L16 38.5 L19 40.4 L22 38.5 L25 40.4 L28 38.5 L31 40.4 L34 38.5 L37 40.4 L40 38.5 L42.7 39.5 L42.7 44 Z" fill="#e4e4e4" shape-rendering="auto"/>
</g>
<pattern id="stipT" width="2" height="2" patternUnits="userSpaceOnUse"><rect width="2" height="2" fill="#000000"/><rect x="0" y="0" width="1" height="1" fill="#fff8dc"/><rect x="1" y="1" width="1" height="1" fill="#fff8dc"/></pattern>
<rect x="0" y="870" width="432" height="28" fill="#fff8dc" />
<rect x="0" y="870" width="4" height="30" fill="#0000cd" />
<rect x="4" y="870" width="15" height="28" fill="url(#stipT)" />
<rect x="19" y="870" width="1" height="28" fill="#000000" />
<clipPath id="termclip"><rect x="20" y="870" width="412" height="28"/></clipPath>
<g clip-path="url(#termclip)">
<text x="22" y="879.3" font-size="15.5" fill="#000000" font-family='"Liberation Mono", monospace' stroke="#000000" stroke-width="0.25" stroke-linejoin="round" textLength="387" lengthAdjust="spacingAndGlyphs"  xml:space="preserve">rain:beaufait:206&gt;xdump.all 970731.1205.xwd</text>
</g>
<rect x="22.5" y="882.5" width="8" height="13" fill="none" stroke="#228b22" stroke-width="1.2"/>
<line x1="4" y1="898.5" x2="432" y2="898.5" stroke="#fff8dc" stroke-width="1" stroke-dasharray="1 1"/>
<rect x="0" y="899" width="432" height="1" fill="#0000cd" />
<line x1="431.5" y1="871" x2="431.5" y2="898" stroke="#ffffff" stroke-width="1" stroke-dasharray="1 1"/>
<line x1="4.5" y1="428" x2="4.5" y2="870" stroke="#ffffff" stroke-width="1" stroke-dasharray="1 1"/>
<line x1="572.5" y1="3" x2="572.5" y2="427" stroke="#ffffff" stroke-width="1" stroke-dasharray="1 1"/>
</svg></body></html>
